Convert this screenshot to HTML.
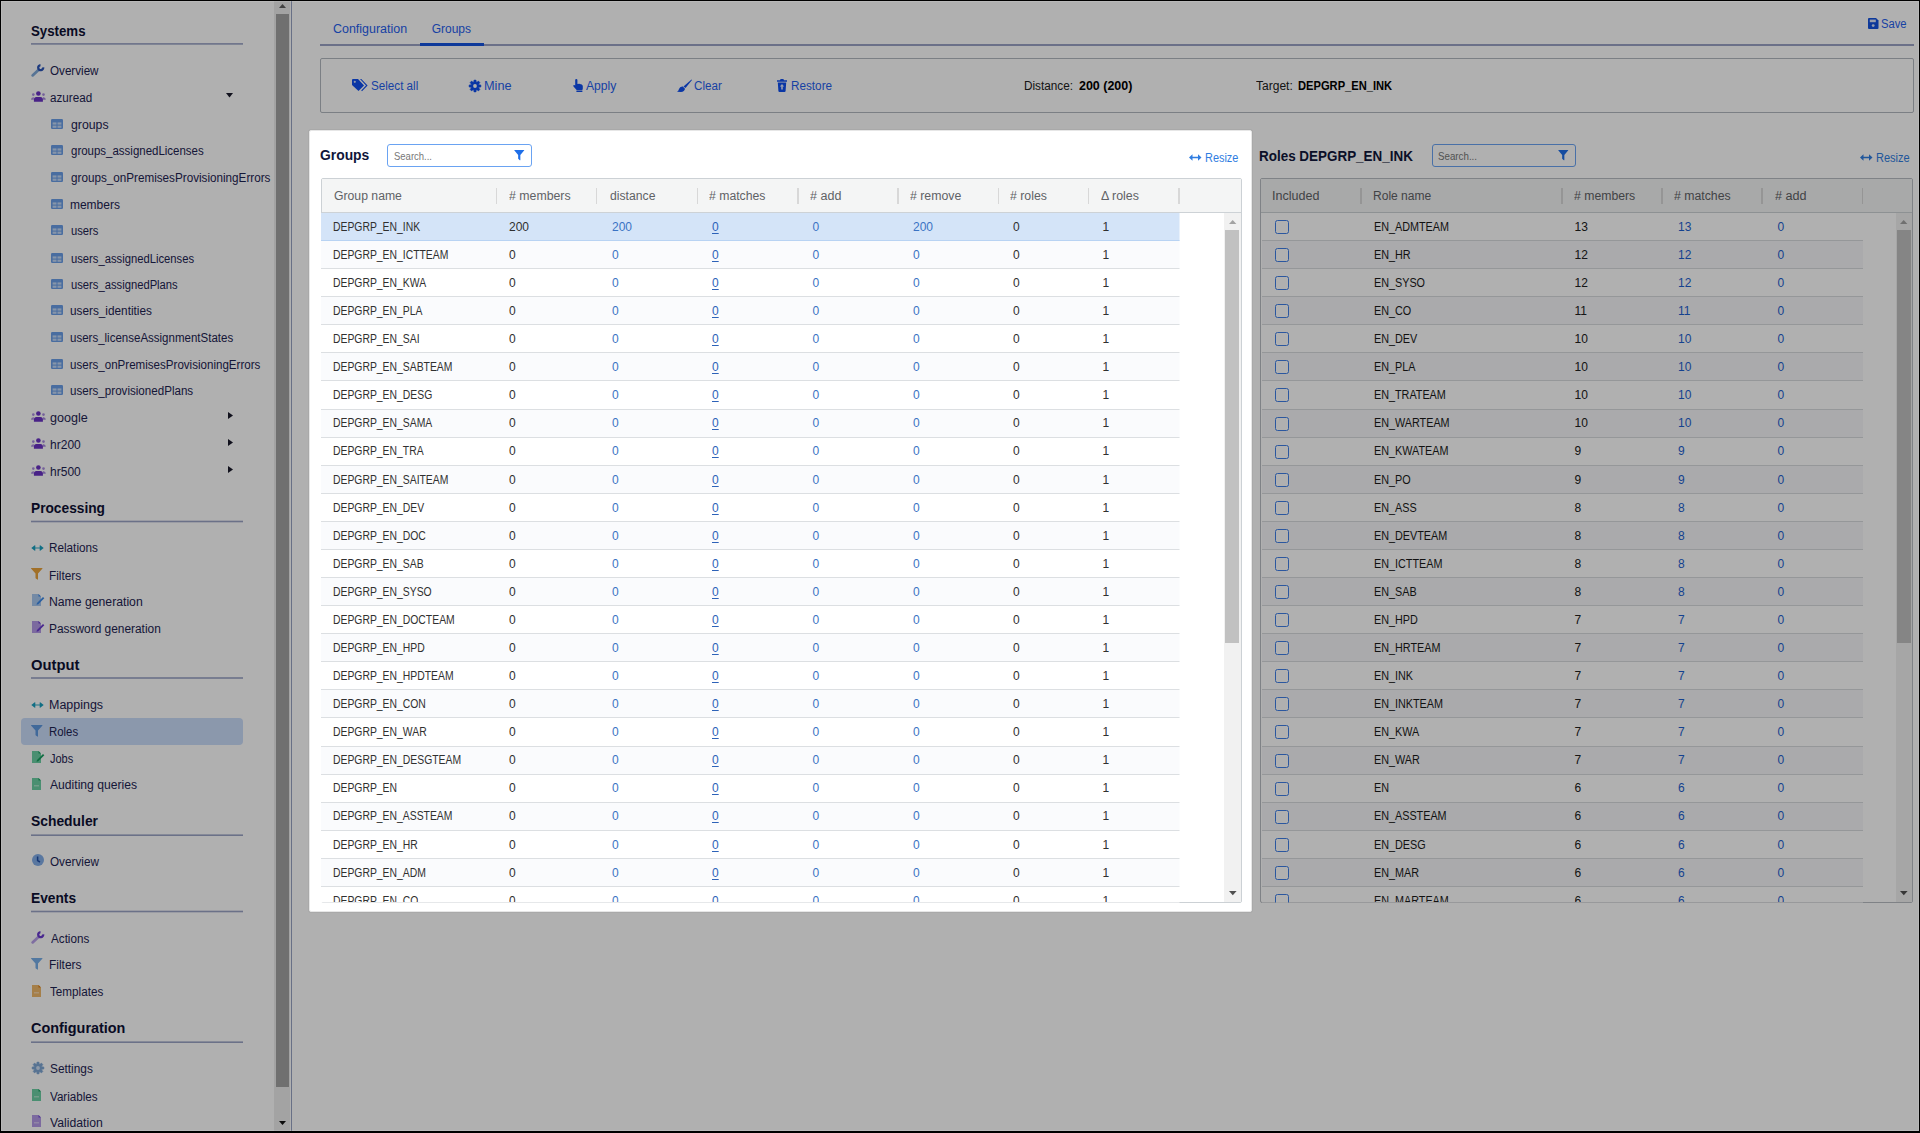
<!DOCTYPE html>
<html><head><meta charset="utf-8"><title>Groups</title><style>
*{margin:0;padding:0;box-sizing:border-box}
html,body{width:1920px;height:1133px;overflow:hidden;background:#fff;font-family:'Liberation Sans',sans-serif}
.t{position:absolute;white-space:nowrap;transform-origin:0 0}
.b{position:absolute}
.ic{position:absolute;overflow:visible}
#ov{position:absolute;left:0;top:0;width:1920px;height:1133px;background:rgba(0,0,0,0.31)}
</style></head>
<body>
<div id="app">
<span class=t style="left:30.85px;top:20.00px;font-size:15px;line-height:21px;font-weight:700;color:#0e1034;transform:scaleX(0.8837);">Systems</span>
<svg class=ic style='left:31px;top:42px' width='212' height='5'><rect x='0' y='1.10' width='212' height='1.6' fill='#9ba4c6'/></svg>
<span class=t style="left:50.10px;top:61.50px;font-size:12px;line-height:17px;font-weight:400;color:#1d2352;transform:scaleX(0.9705);margin-top:1px;">Overview</span>
<svg class=ic style="left:31px;top:64px" width="13" height="13" viewBox="0 0 13 13"><path d='M1.6 11.4 L7.4 5.9' stroke='#7ea9d8' stroke-width='2.7' stroke-linecap='round'/><path d='M12.19 3.38 A2.5 2.5 0 1 1 9.48 1.11' stroke='#2a55b8' stroke-width='2.3' fill='none' stroke-linecap='butt'/></svg>
<span class=t style="left:50.10px;top:88.50px;font-size:12px;line-height:17px;font-weight:400;color:#1d2352;transform:scaleX(0.9721);margin-top:1px;">azuread</span>
<svg class=ic style="left:31px;top:91px" width="15" height="11" viewBox="0 0 15 11"><circle cx='7.4' cy='2.5' r='2.3' fill='#6a32c4'/><path d='M2.9 10.8 V8.6 Q2.9 6.1 5.4 6.1 H9.4 Q11.9 6.1 11.9 8.6 V10.8Z' fill='#6a32c4'/><circle cx='2.3' cy='3.6' r='1.3' fill='#a98be0'/><circle cx='12.5' cy='3.6' r='1.3' fill='#a98be0'/><path d='M0 8.8 Q0 6.2 2.2 6.2 H2.8 V8.8Z' fill='#a98be0'/><path d='M14.8 8.8 Q14.8 6.2 12.6 6.2 H12 V8.8Z' fill='#a98be0'/></svg>
<svg class=ic style="left:225.5px;top:92.5px" width="7" height="4.5" viewBox="0 0 7 4.5"><path d='M0 0 H7 L3.5 4.5Z' fill='#1a1a2a'/></svg>
<span class=t style="left:70.72px;top:115.50px;font-size:12px;line-height:17px;font-weight:400;color:#1d2352;transform:scaleX(1.0249);margin-top:1px;">groups</span>
<svg class=ic style="left:51px;top:119px" width="12" height="10" viewBox="0 0 12 10"><rect x='0' y='0' width='12' height='10' rx='1.3' fill='#6a9ee8'/><rect x='1.6' y='3.4' width='3.9' height='2.2' fill='#fff' opacity='.6'/><rect x='6.5' y='3.4' width='3.9' height='2.2' fill='#fff' opacity='.6'/><rect x='1.6' y='6.6' width='3.9' height='2.2' fill='#fff' opacity='.6'/><rect x='6.5' y='6.6' width='3.9' height='2.2' fill='#fff' opacity='.6'/></svg>
<span class=t style="left:70.72px;top:141.50px;font-size:12px;line-height:17px;font-weight:400;color:#1d2352;transform:scaleX(0.9564);margin-top:1px;">groups_assignedLicenses</span>
<svg class=ic style="left:51px;top:145px" width="12" height="10" viewBox="0 0 12 10"><rect x='0' y='0' width='12' height='10' rx='1.3' fill='#6a9ee8'/><rect x='1.6' y='3.4' width='3.9' height='2.2' fill='#fff' opacity='.6'/><rect x='6.5' y='3.4' width='3.9' height='2.2' fill='#fff' opacity='.6'/><rect x='1.6' y='6.6' width='3.9' height='2.2' fill='#fff' opacity='.6'/><rect x='6.5' y='6.6' width='3.9' height='2.2' fill='#fff' opacity='.6'/></svg>
<span class=t style="left:70.72px;top:168.50px;font-size:12px;line-height:17px;font-weight:400;color:#1d2352;transform:scaleX(0.9740);margin-top:1px;">groups_onPremisesProvisioningErrors</span>
<svg class=ic style="left:51px;top:172px" width="12" height="10" viewBox="0 0 12 10"><rect x='0' y='0' width='12' height='10' rx='1.3' fill='#6a9ee8'/><rect x='1.6' y='3.4' width='3.9' height='2.2' fill='#fff' opacity='.6'/><rect x='6.5' y='3.4' width='3.9' height='2.2' fill='#fff' opacity='.6'/><rect x='1.6' y='6.6' width='3.9' height='2.2' fill='#fff' opacity='.6'/><rect x='6.5' y='6.6' width='3.9' height='2.2' fill='#fff' opacity='.6'/></svg>
<span class=t style="left:69.92px;top:195.50px;font-size:12px;line-height:17px;font-weight:400;color:#1d2352;margin-top:1px;">members</span>
<svg class=ic style="left:51px;top:199px" width="12" height="10" viewBox="0 0 12 10"><rect x='0' y='0' width='12' height='10' rx='1.3' fill='#6a9ee8'/><rect x='1.6' y='3.4' width='3.9' height='2.2' fill='#fff' opacity='.6'/><rect x='6.5' y='3.4' width='3.9' height='2.2' fill='#fff' opacity='.6'/><rect x='1.6' y='6.6' width='3.9' height='2.2' fill='#fff' opacity='.6'/><rect x='6.5' y='6.6' width='3.9' height='2.2' fill='#fff' opacity='.6'/></svg>
<span class=t style="left:70.72px;top:221.50px;font-size:12px;line-height:17px;font-weight:400;color:#1d2352;transform:scaleX(0.9350);margin-top:1px;">users</span>
<svg class=ic style="left:51px;top:225px" width="12" height="10" viewBox="0 0 12 10"><rect x='0' y='0' width='12' height='10' rx='1.3' fill='#6a9ee8'/><rect x='1.6' y='3.4' width='3.9' height='2.2' fill='#fff' opacity='.6'/><rect x='6.5' y='3.4' width='3.9' height='2.2' fill='#fff' opacity='.6'/><rect x='1.6' y='6.6' width='3.9' height='2.2' fill='#fff' opacity='.6'/><rect x='6.5' y='6.6' width='3.9' height='2.2' fill='#fff' opacity='.6'/></svg>
<span class=t style="left:70.72px;top:249.50px;font-size:12px;line-height:17px;font-weight:400;color:#1d2352;transform:scaleX(0.9365);margin-top:1px;">users_assignedLicenses</span>
<svg class=ic style="left:51px;top:253px" width="12" height="10" viewBox="0 0 12 10"><rect x='0' y='0' width='12' height='10' rx='1.3' fill='#6a9ee8'/><rect x='1.6' y='3.4' width='3.9' height='2.2' fill='#fff' opacity='.6'/><rect x='6.5' y='3.4' width='3.9' height='2.2' fill='#fff' opacity='.6'/><rect x='1.6' y='6.6' width='3.9' height='2.2' fill='#fff' opacity='.6'/><rect x='6.5' y='6.6' width='3.9' height='2.2' fill='#fff' opacity='.6'/></svg>
<span class=t style="left:70.72px;top:275.50px;font-size:12px;line-height:17px;font-weight:400;color:#1d2352;transform:scaleX(0.9355);margin-top:1px;">users_assignedPlans</span>
<svg class=ic style="left:51px;top:279px" width="12" height="10" viewBox="0 0 12 10"><rect x='0' y='0' width='12' height='10' rx='1.3' fill='#6a9ee8'/><rect x='1.6' y='3.4' width='3.9' height='2.2' fill='#fff' opacity='.6'/><rect x='6.5' y='3.4' width='3.9' height='2.2' fill='#fff' opacity='.6'/><rect x='1.6' y='6.6' width='3.9' height='2.2' fill='#fff' opacity='.6'/><rect x='6.5' y='6.6' width='3.9' height='2.2' fill='#fff' opacity='.6'/></svg>
<span class=t style="left:69.92px;top:301.50px;font-size:12px;line-height:17px;font-weight:400;color:#1d2352;transform:scaleX(0.9820);margin-top:1px;">users_identities</span>
<svg class=ic style="left:51px;top:305px" width="12" height="10" viewBox="0 0 12 10"><rect x='0' y='0' width='12' height='10' rx='1.3' fill='#6a9ee8'/><rect x='1.6' y='3.4' width='3.9' height='2.2' fill='#fff' opacity='.6'/><rect x='6.5' y='3.4' width='3.9' height='2.2' fill='#fff' opacity='.6'/><rect x='1.6' y='6.6' width='3.9' height='2.2' fill='#fff' opacity='.6'/><rect x='6.5' y='6.6' width='3.9' height='2.2' fill='#fff' opacity='.6'/></svg>
<span class=t style="left:69.92px;top:328.50px;font-size:12px;line-height:17px;font-weight:400;color:#1d2352;transform:scaleX(0.9592);margin-top:1px;">users_licenseAssignmentStates</span>
<svg class=ic style="left:51px;top:332px" width="12" height="10" viewBox="0 0 12 10"><rect x='0' y='0' width='12' height='10' rx='1.3' fill='#6a9ee8'/><rect x='1.6' y='3.4' width='3.9' height='2.2' fill='#fff' opacity='.6'/><rect x='6.5' y='3.4' width='3.9' height='2.2' fill='#fff' opacity='.6'/><rect x='1.6' y='6.6' width='3.9' height='2.2' fill='#fff' opacity='.6'/><rect x='6.5' y='6.6' width='3.9' height='2.2' fill='#fff' opacity='.6'/></svg>
<span class=t style="left:69.92px;top:355.50px;font-size:12px;line-height:17px;font-weight:400;color:#1d2352;transform:scaleX(0.9641);margin-top:1px;">users_onPremisesProvisioningErrors</span>
<svg class=ic style="left:51px;top:359px" width="12" height="10" viewBox="0 0 12 10"><rect x='0' y='0' width='12' height='10' rx='1.3' fill='#6a9ee8'/><rect x='1.6' y='3.4' width='3.9' height='2.2' fill='#fff' opacity='.6'/><rect x='6.5' y='3.4' width='3.9' height='2.2' fill='#fff' opacity='.6'/><rect x='1.6' y='6.6' width='3.9' height='2.2' fill='#fff' opacity='.6'/><rect x='6.5' y='6.6' width='3.9' height='2.2' fill='#fff' opacity='.6'/></svg>
<span class=t style="left:69.92px;top:381.50px;font-size:12px;line-height:17px;font-weight:400;color:#1d2352;transform:scaleX(0.9667);margin-top:1px;">users_provisionedPlans</span>
<svg class=ic style="left:51px;top:385px" width="12" height="10" viewBox="0 0 12 10"><rect x='0' y='0' width='12' height='10' rx='1.3' fill='#6a9ee8'/><rect x='1.6' y='3.4' width='3.9' height='2.2' fill='#fff' opacity='.6'/><rect x='6.5' y='3.4' width='3.9' height='2.2' fill='#fff' opacity='.6'/><rect x='1.6' y='6.6' width='3.9' height='2.2' fill='#fff' opacity='.6'/><rect x='6.5' y='6.6' width='3.9' height='2.2' fill='#fff' opacity='.6'/></svg>
<span class=t style="left:50.10px;top:408.50px;font-size:12px;line-height:17px;font-weight:400;color:#1d2352;transform:scaleX(1.0486);margin-top:1px;">google</span>
<svg class=ic style="left:31px;top:411px" width="15" height="11" viewBox="0 0 15 11"><circle cx='7.4' cy='2.5' r='2.3' fill='#6a32c4'/><path d='M2.9 10.8 V8.6 Q2.9 6.1 5.4 6.1 H9.4 Q11.9 6.1 11.9 8.6 V10.8Z' fill='#6a32c4'/><circle cx='2.3' cy='3.6' r='1.3' fill='#a98be0'/><circle cx='12.5' cy='3.6' r='1.3' fill='#a98be0'/><path d='M0 8.8 Q0 6.2 2.2 6.2 H2.8 V8.8Z' fill='#a98be0'/><path d='M14.8 8.8 Q14.8 6.2 12.6 6.2 H12 V8.8Z' fill='#a98be0'/></svg>
<svg class=ic style="left:228px;top:411.5px" width="5" height="7" viewBox="0 0 5 7"><path d='M0 0 L5 3.5 L0 7Z' fill='#1a1a2a'/></svg>
<span class=t style="left:50.10px;top:435.50px;font-size:12px;line-height:17px;font-weight:400;color:#1d2352;margin-top:1px;">hr200</span>
<svg class=ic style="left:31px;top:438px" width="15" height="11" viewBox="0 0 15 11"><circle cx='7.4' cy='2.5' r='2.3' fill='#6a32c4'/><path d='M2.9 10.8 V8.6 Q2.9 6.1 5.4 6.1 H9.4 Q11.9 6.1 11.9 8.6 V10.8Z' fill='#6a32c4'/><circle cx='2.3' cy='3.6' r='1.3' fill='#a98be0'/><circle cx='12.5' cy='3.6' r='1.3' fill='#a98be0'/><path d='M0 8.8 Q0 6.2 2.2 6.2 H2.8 V8.8Z' fill='#a98be0'/><path d='M14.8 8.8 Q14.8 6.2 12.6 6.2 H12 V8.8Z' fill='#a98be0'/></svg>
<svg class=ic style="left:228px;top:438.5px" width="5" height="7" viewBox="0 0 5 7"><path d='M0 0 L5 3.5 L0 7Z' fill='#1a1a2a'/></svg>
<span class=t style="left:50.10px;top:462.50px;font-size:12px;line-height:17px;font-weight:400;color:#1d2352;margin-top:1px;">hr500</span>
<svg class=ic style="left:31px;top:465px" width="15" height="11" viewBox="0 0 15 11"><circle cx='7.4' cy='2.5' r='2.3' fill='#6a32c4'/><path d='M2.9 10.8 V8.6 Q2.9 6.1 5.4 6.1 H9.4 Q11.9 6.1 11.9 8.6 V10.8Z' fill='#6a32c4'/><circle cx='2.3' cy='3.6' r='1.3' fill='#a98be0'/><circle cx='12.5' cy='3.6' r='1.3' fill='#a98be0'/><path d='M0 8.8 Q0 6.2 2.2 6.2 H2.8 V8.8Z' fill='#a98be0'/><path d='M14.8 8.8 Q14.8 6.2 12.6 6.2 H12 V8.8Z' fill='#a98be0'/></svg>
<svg class=ic style="left:228px;top:465.5px" width="5" height="7" viewBox="0 0 5 7"><path d='M0 0 L5 3.5 L0 7Z' fill='#1a1a2a'/></svg>
<span class=t style="left:30.85px;top:497.00px;font-size:15px;line-height:21px;font-weight:700;color:#0e1034;transform:scaleX(0.9148);">Processing</span>
<svg class=ic style='left:31px;top:519px' width='212' height='5'><rect x='0' y='1.70' width='212' height='1.6' fill='#9ba4c6'/></svg>
<span class=t style="left:49.30px;top:538.50px;font-size:12px;line-height:17px;font-weight:400;color:#1d2352;transform:scaleX(0.9773);margin-top:1px;">Relations</span>
<svg class=ic style="left:31.2px;top:545px" width="13" height="6" viewBox="0 0 13 6"><path d='M0.3 3 L3.8 0.2 Q4.3 0 4.3 0.6 V5.4 Q4.3 6 3.8 5.8Z M12.7 3 L9.2 0.2 Q8.7 0 8.7 0.6 V5.4 Q8.7 6 9.2 5.8Z' fill='#1aa0c0'/><rect x='4' y='2.2' width='5' height='1.6' fill='#1aa0c0' opacity='.55'/></svg>
<span class=t style="left:49.30px;top:566.50px;font-size:12px;line-height:17px;font-weight:400;color:#1d2352;transform:scaleX(0.9850);margin-top:1px;">Filters</span>
<svg class=ic style="left:31.2px;top:567.5px" width="11.5" height="12" viewBox="0 0 11.5 12"><path d='M0.2 0 H11.3 Q11.7 0 11.5 0.4 L7 5.6 V11.3 Q7 12 6.4 11.6 L4.8 10.4 Q4.5 10.2 4.5 9.8 V5.6 L0 0.4 Q-0.2 0 0.2 0Z' fill='#e9a23b'/></svg>
<span class=t style="left:49.30px;top:592.50px;font-size:12px;line-height:17px;font-weight:400;color:#1d2352;transform:scaleX(1.0178);margin-top:1px;">Name generation</span>
<svg class=ic style="left:31.5px;top:594px" width="13" height="12" viewBox="0 0 13 12"><path d='M0 0 H6.5 L9 2.5 V12 H0Z' fill='#a9c8f0'/><path d='M5 9 L11 3 L12.3 4.3 L6.3 10.3 L4.5 10.8Z' fill='#3d8ae8'/><path d='M6.5 0 V2.5 H9Z' fill='#3d8ae8'/></svg>
<span class=t style="left:49.30px;top:619.50px;font-size:12px;line-height:17px;font-weight:400;color:#1d2352;transform:scaleX(0.9917);margin-top:1px;">Password generation</span>
<svg class=ic style="left:31.5px;top:621px" width="13" height="12" viewBox="0 0 13 12"><path d='M0 0 H6.5 L9 2.5 V12 H0Z' fill='#b49ae6'/><path d='M5 9 L11 3 L12.3 4.3 L6.3 10.3 L4.5 10.8Z' fill='#6a3ad0'/><path d='M6.5 0 V2.5 H9Z' fill='#6a3ad0'/></svg>
<span class=t style="left:30.85px;top:654.00px;font-size:15px;line-height:21px;font-weight:700;color:#0e1034;transform:scaleX(0.9860);">Output</span>
<svg class=ic style='left:31px;top:676px' width='212' height='5'><rect x='0' y='1.20' width='212' height='1.6' fill='#9ba4c6'/></svg>
<span class=t style="left:49.30px;top:695.50px;font-size:12px;line-height:17px;font-weight:400;color:#1d2352;transform:scaleX(1.0393);margin-top:1px;">Mappings</span>
<svg class=ic style="left:31.2px;top:702px" width="13" height="6" viewBox="0 0 13 6"><path d='M0.3 3 L3.8 0.2 Q4.3 0 4.3 0.6 V5.4 Q4.3 6 3.8 5.8Z M12.7 3 L9.2 0.2 Q8.7 0 8.7 0.6 V5.4 Q8.7 6 9.2 5.8Z' fill='#1aa0c0'/><rect x='4' y='2.2' width='5' height='1.6' fill='#1aa0c0' opacity='.55'/></svg>
<div class=b style='left:21px;top:717.5px;width:222px;height:27px;border-radius:4px;background:#cadcfa'></div>
<span class=t style="left:49.30px;top:722.50px;font-size:12px;line-height:17px;font-weight:400;color:#1d2352;transform:scaleX(0.9480);margin-top:1px;">Roles</span>
<svg class=ic style="left:31.2px;top:724.5px" width="11.5" height="12" viewBox="0 0 11.5 12"><path d='M0.2 0 H11.3 Q11.7 0 11.5 0.4 L7 5.6 V11.3 Q7 12 6.4 11.6 L4.8 10.4 Q4.5 10.2 4.5 9.8 V5.6 L0 0.4 Q-0.2 0 0.2 0Z' fill='#5e98e0'/></svg>
<span class=t style="left:50.10px;top:749.50px;font-size:12px;line-height:17px;font-weight:400;color:#1d2352;transform:scaleX(0.9170);margin-top:1px;">Jobs</span>
<svg class=ic style="left:31.5px;top:751px" width="13" height="12" viewBox="0 0 13 12"><path d='M0 0 H6.5 L9 2.5 V12 H0Z' fill='#6cd0a4'/><path d='M5 9 L11 3 L12.3 4.3 L6.3 10.3 L4.5 10.8Z' fill='#18a060'/><path d='M6.5 0 V2.5 H9Z' fill='#18a060'/></svg>
<span class=t style="left:50.10px;top:775.50px;font-size:12px;line-height:17px;font-weight:400;color:#1d2352;transform:scaleX(1.0109);margin-top:1px;">Auditing queries</span>
<svg class=ic style="left:31.5px;top:778px" width="9" height="12" viewBox="0 0 9 12"><path d='M0 0 H6.5 L9 2.5 V12 H0Z' fill='#6cd0a4'/><path d='M6.5 0 V2.5 H9Z' fill='#18a060'/><rect x='2' y='7.2' width='5' height='1.2' fill='#fff' opacity='.5'/></svg>
<span class=t style="left:30.85px;top:810.00px;font-size:15px;line-height:21px;font-weight:700;color:#0e1034;transform:scaleX(0.9238);">Scheduler</span>
<svg class=ic style='left:31px;top:833px' width='212' height='5'><rect x='0' y='1.40' width='212' height='1.6' fill='#9ba4c6'/></svg>
<span class=t style="left:50.10px;top:852.50px;font-size:12px;line-height:17px;font-weight:400;color:#1d2352;transform:scaleX(0.9776);margin-top:1px;">Overview</span>
<svg class=ic style="left:31.5px;top:854px" width="12" height="12" viewBox="0 0 12 12"><circle cx='6' cy='6' r='6' fill='#82ade8'/><path d='M5.6 2.5 V6.6 L8 8' stroke='#1f4fa8' stroke-width='1.5' fill='none'/></svg>
<span class=t style="left:30.85px;top:887.00px;font-size:15px;line-height:21px;font-weight:700;color:#0e1034;transform:scaleX(0.9162);">Events</span>
<svg class=ic style='left:31px;top:909px' width='212' height='5'><rect x='0' y='1.70' width='212' height='1.6' fill='#9ba4c6'/></svg>
<span class=t style="left:50.90px;top:929.50px;font-size:12px;line-height:17px;font-weight:400;color:#1d2352;transform:scaleX(0.9730);margin-top:1px;">Actions</span>
<svg class=ic style="left:31px;top:931px" width="13" height="13" viewBox="0 0 13 13"><path d='M1.6 11.4 L7.4 5.9' stroke='#b9a0ea' stroke-width='2.7' stroke-linecap='round'/><path d='M12.19 3.38 A2.5 2.5 0 1 1 9.48 1.11' stroke='#6a3ad0' stroke-width='2.3' fill='none' stroke-linecap='butt'/></svg>
<span class=t style="left:49.30px;top:955.50px;font-size:12px;line-height:17px;font-weight:400;color:#1d2352;transform:scaleX(0.9935);margin-top:1px;">Filters</span>
<svg class=ic style="left:31.2px;top:958px" width="11.5" height="12" viewBox="0 0 11.5 12"><path d='M0.2 0 H11.3 Q11.7 0 11.5 0.4 L7 5.6 V11.3 Q7 12 6.4 11.6 L4.8 10.4 Q4.5 10.2 4.5 9.8 V5.6 L0 0.4 Q-0.2 0 0.2 0Z' fill='#78aee8'/></svg>
<span class=t style="left:50.10px;top:982.50px;font-size:12px;line-height:17px;font-weight:400;color:#1d2352;transform:scaleX(0.9736);margin-top:1px;">Templates</span>
<svg class=ic style="left:31.5px;top:985px" width="9" height="12" viewBox="0 0 9 12"><path d='M0 0 H6.5 L9 2.5 V12 H0Z' fill='#f0b86a'/><path d='M6.5 0 V2.5 H9Z' fill='#d97a10'/><rect x='2' y='7.2' width='5' height='1.2' fill='#fff' opacity='.5'/></svg>
<span class=t style="left:30.85px;top:1017.00px;font-size:15px;line-height:21px;font-weight:700;color:#0e1034;transform:scaleX(0.9604);">Configuration</span>
<svg class=ic style='left:31px;top:1040px' width='212' height='5'><rect x='0' y='1.40' width='212' height='1.6' fill='#9ba4c6'/></svg>
<span class=t style="left:50.10px;top:1059.50px;font-size:12px;line-height:17px;font-weight:400;color:#1d2352;transform:scaleX(0.9893);margin-top:1px;">Settings</span>
<svg class=ic style="left:31.5px;top:1062px" width="12" height="12" viewBox="0 0 12 12"><polygon points='9.88,4.67 11.91,4.98 11.91,7.02 9.88,7.33 9.68,7.80 10.90,9.46 9.46,10.90 7.80,9.68 7.33,9.88 7.02,11.91 4.98,11.91 4.67,9.88 4.20,9.68 2.54,10.90 1.10,9.46 2.32,7.80 2.12,7.33 0.09,7.02 0.09,4.98 2.12,4.67 2.32,4.20 1.10,2.54 2.54,1.10 4.20,2.32 4.67,2.12 4.98,0.09 7.02,0.09 7.33,2.12 7.80,2.32 9.46,1.10 10.90,2.54 9.68,4.20' fill='#7fa7d4' stroke='#7fa7d4' stroke-width='0.5' stroke-linejoin='round'/><circle cx='6' cy='6' r='1.9' fill='#cfe0f4'/></svg>
<span class=t style="left:50.10px;top:1087.50px;font-size:12px;line-height:17px;font-weight:400;color:#1d2352;transform:scaleX(0.9690);margin-top:1px;">Variables</span>
<svg class=ic style="left:31.5px;top:1089px" width="9" height="12" viewBox="0 0 9 12"><path d='M0 0 H6.5 L9 2.5 V12 H0Z' fill='#6cd0a4'/><path d='M6.5 0 V2.5 H9Z' fill='#18a060'/><rect x='2' y='7.2' width='5' height='1.2' fill='#fff' opacity='.5'/></svg>
<span class=t style="left:50.10px;top:1113.50px;font-size:12px;line-height:17px;font-weight:400;color:#1d2352;transform:scaleX(1.0188);margin-top:1px;">Validation</span>
<svg class=ic style="left:31.5px;top:1115px" width="9" height="12" viewBox="0 0 9 12"><path d='M0 0 H6.5 L9 2.5 V12 H0Z' fill='#b49ae6'/><path d='M6.5 0 V2.5 H9Z' fill='#7048d8'/><rect x='2' y='7.2' width='5' height='1.2' fill='#fff' opacity='.5'/></svg>
<div class=b style='left:274px;top:1px;width:16px;height:1131px;background:#ececec'></div>
<div class=b style='left:275.5px;top:14px;width:13.5px;height:1073px;background:#a3a3a3'></div>
<svg class=ic style="left:278.7px;top:4px" width="7" height="4" viewBox="0 0 7 4"><path d='M0 4 H7 L3.5 0Z' fill='#606060'/></svg>
<svg class=ic style="left:278.7px;top:1120.5px" width="7" height="4" viewBox="0 0 7 4"><path d='M0 0 H7 L3.5 4Z' fill='#101010'/></svg>
<div class=b style='left:291px;top:0;width:1px;height:1133px;background:#97a2c2'></div>
<span class=t style="left:332.74px;top:19.50px;font-size:12px;line-height:17px;font-weight:400;color:#1f60ee;transform:scaleX(1.0376);margin-top:1px;">Configuration</span>
<span class=t style="left:431.66px;top:19.50px;font-size:12px;line-height:17px;font-weight:400;color:#1f60ee;margin-top:1px;">Groups</span>
<div class=b style='left:320px;top:44px;width:1594px;height:2px;background:#9ba3c6'></div>
<div class=b style='left:419.5px;top:42.5px;width:64px;height:3px;background:#1553e0'></div>
<svg class=ic style="left:1868px;top:18px" width="10.5" height="11" viewBox="0 0 10.5 11"><path d='M0 1 Q0 0 1 0 H8 L10.5 2.5 V10 Q10.5 11 9.5 11 H1 Q0 11 0 10Z' fill='#1553e0'/><rect x='1.8' y='1.6' width='6' height='2.6' fill='#fff' opacity='.85'/><circle cx='5.2' cy='7.6' r='1.4' fill='#fff' opacity='.85'/></svg>
<span class=t style="left:1880.84px;top:15.50px;font-size:12px;line-height:17px;font-weight:400;color:#1f60ee;transform:scaleX(0.9334);">Save</span>
<div class=b style='left:320px;top:58px;width:1594px;height:55px;border:1px solid #b3b8c0;border-radius:2px'></div>
<svg class=ic style="left:352px;top:79px" width="16" height="13" viewBox="0 0 16 13"><path d='M0 1 Q0 0 1 0 H6 L12 6.5 L6.5 12 L0 6Z' fill='#0f4ff0'/><circle cx='2.8' cy='2.8' r='1.1' fill='#fff' opacity='.8'/><path d='M8 0 H9.3 L15.6 6.5 L10 12.3 L9.2 11.5 L14 6.5Z' fill='#0f4ff0'/></svg>
<span class=t style="left:371.20px;top:77.50px;font-size:12px;line-height:17px;font-weight:400;color:#1f60ee;transform:scaleX(0.9704);">Select all</span>
<svg class=ic style="left:469px;top:79.5px" width="12" height="12" viewBox="0 0 12 12"><polygon points='9.88,4.67 11.91,4.98 11.91,7.02 9.88,7.33 9.68,7.80 10.90,9.46 9.46,10.90 7.80,9.68 7.33,9.88 7.02,11.91 4.98,11.91 4.67,9.88 4.20,9.68 2.54,10.90 1.10,9.46 2.32,7.80 2.12,7.33 0.09,7.02 0.09,4.98 2.12,4.67 2.32,4.20 1.10,2.54 2.54,1.10 4.20,2.32 4.67,2.12 4.98,0.09 7.02,0.09 7.33,2.12 7.80,2.32 9.46,1.10 10.90,2.54 9.68,4.20' fill='#0f4ff0' stroke='#0f4ff0' stroke-width='0.5' stroke-linejoin='round'/><circle cx='6' cy='6' r='1.9' fill='#fff'/></svg>
<span class=t style="left:483.92px;top:77.50px;font-size:12px;line-height:17px;font-weight:400;color:#1f60ee;transform:scaleX(1.0584);">Mine</span>
<svg class=ic style="left:572.5px;top:78.5px" width="10" height="13" viewBox="0 0 10 13"><path d='M2.2 1.1 Q2.2 0 3.3 0 Q4.4 0 4.4 1.1 V5 Q5.2 4.4 6 5 Q6.9 4.5 7.6 5.3 Q8.6 5 9.2 5.9 Q9.8 6.3 9.8 7.2 V9.6 Q9.8 10.6 9.3 11 H3.6 L0.5 7.6 Q-0.2 6.6 0.8 6.1 Q1.5 5.8 2.2 6.5Z' fill='#0f4ff0'/><rect x='3.4' y='11.4' width='6' height='1.6' rx='0.3' fill='#0f4ff0'/></svg>
<span class=t style="left:586.00px;top:77.50px;font-size:12px;line-height:17px;font-weight:400;color:#1f60ee;transform:scaleX(1.0109);">Apply</span>
<svg class=ic style="left:676.6px;top:79px" width="15" height="13" viewBox="0 0 15 13"><path d='M6.5 7.5 L14.5 0.5 L15 1 L8.5 9Z' fill='#0f4ff0'/><path d='M0 12.8 Q1.5 12 2 10 Q2.8 7.2 5.8 7.5 L8 9.7 Q7.5 12.8 4 13Z' fill='#0f4ff0'/></svg>
<span class=t style="left:694.20px;top:77.50px;font-size:12px;line-height:17px;font-weight:400;color:#1f60ee;transform:scaleX(0.9691);">Clear</span>
<svg class=ic style="left:777px;top:78.5px" width="10" height="13" viewBox="0 0 10 13"><path d='M0 1.2 H3 L3.6 0 H6.4 L7 1.2 H10 V2.8 H0Z M0.8 3.5 H9.2 L8.6 12 Q8.5 13 7.5 13 H2.5 Q1.5 13 1.4 12Z' fill='#0f4ff0'/><path d='M5 5 L7.2 7.6 H5.8 V10.5 H4.2 V7.6 H2.8Z' fill='#fff' opacity='.85'/></svg>
<span class=t style="left:790.74px;top:77.50px;font-size:12px;line-height:17px;font-weight:400;color:#1f60ee;transform:scaleX(0.9774);">Restore</span>
<span class=t style="left:1024.20px;top:77.50px;font-size:12px;line-height:17px;font-weight:400;color:#202020;transform:scaleX(0.9809);">Distance:</span>
<span class=t style="left:1079.00px;top:77.50px;font-size:12px;line-height:17px;font-weight:700;color:#000;transform:scaleX(1.0386);">200 (200)</span>
<span class=t style="left:1256.00px;top:77.50px;font-size:12px;line-height:17px;font-weight:400;color:#202020;transform:scaleX(1.0031);">Target:</span>
<span class=t style="left:1298.10px;top:77.50px;font-size:12px;line-height:17px;font-weight:700;color:#000;transform:scaleX(0.9290);">DEPGRP_EN_INK</span>
<span class=t style="left:1259.30px;top:146.00px;font-size:14px;line-height:20px;font-weight:700;color:#10163a;transform:scaleX(0.9601);">Roles DEPGRP_EN_INK</span>
<div class=b style='left:1432px;top:143.6px;width:143.5999999999999px;height:23.0px;border:1.5px solid #6aa3f2;border-radius:3px;background:#fff'></div>
<span class=t style="left:1438.20px;top:148.50px;font-size:11px;line-height:15px;font-weight:400;color:#777;transform:scaleX(0.8860);">Search...</span>
<svg class=ic style="left:1557.5px;top:150px" width="10.5" height="10.5" viewBox="0 0 11.5 12"><path d='M0.2 0 H11.3 Q11.7 0 11.5 0.4 L7 5.6 V11.3 Q7 12 6.4 11.6 L4.8 10.4 Q4.5 10.2 4.5 9.8 V5.6 L0 0.4 Q-0.2 0 0.2 0Z' fill='#1f6fe8'/></svg>
<svg class=ic style="left:1860px;top:153.5px" width="12.5" height="7" viewBox="0 0 12.5 7"><path d='M0 3.5 L3.5 0.3 V2.7 H9 V0.3 L12.5 3.5 L9 6.7 V4.3 H3.5 V6.7Z' fill='#2f7de1'/></svg>
<span class=t style="left:1875.74px;top:149.50px;font-size:12px;line-height:17px;font-weight:400;color:#2f7de1;transform:scaleX(0.9190);">Resize</span>
<div class=b style='left:1260px;top:178px;width:653px;height:725px;border:1px solid #b9bdc2;border-radius:2px;overflow:hidden'></div>
<div class=b style='left:1261px;top:179px;width:651px;height:34px;background:#f4f5f5;border-bottom:1px solid #cdd2d6'></div>
<div class=b style='left:1360.2px;top:188px;width:1.5px;height:15.5px;background:#d8d8d8'></div>
<div class=b style='left:1561.3px;top:188px;width:1.5px;height:15.5px;background:#d8d8d8'></div>
<div class=b style='left:1661.2px;top:188px;width:1.5px;height:15.5px;background:#d8d8d8'></div>
<div class=b style='left:1761.4px;top:188px;width:1.5px;height:15.5px;background:#d8d8d8'></div>
<div class=b style='left:1861.9px;top:188px;width:1.5px;height:15.5px;background:#d8d8d8'></div>
<span class=t style="left:1272.48px;top:187.50px;font-size:12px;line-height:17px;font-weight:400;color:#5f6266;transform:scaleX(1.0457);">Included</span>
<span class=t style="left:1373.02px;top:187.50px;font-size:12px;line-height:17px;font-weight:400;color:#5f6266;transform:scaleX(1.0039);">Role name</span>
<span class=t style="left:1574.10px;top:187.50px;font-size:12px;line-height:17px;font-weight:400;color:#5f6266;transform:scaleX(1.0192);"># members</span>
<span class=t style="left:1674.28px;top:187.50px;font-size:12px;line-height:17px;font-weight:400;color:#5f6266;transform:scaleX(1.0228);"># matches</span>
<span class=t style="left:1775.18px;top:187.50px;font-size:12px;line-height:17px;font-weight:400;color:#5f6266;transform:scaleX(1.0500);"># add</span>
<div class=b style='left:1896px;top:213px;width:16px;height:689px;background:#f1f1f1'></div>
<div class=b style='left:1897px;top:229.5px;width:14px;height:413.5px;background:#c1c1c1'></div>
<svg class=ic style="left:1899.8px;top:220px" width="7.4" height="4" viewBox="0 0 7.4 4"><path d='M0 4 H7.4 L3.7 0Z' fill='#a3a3a3'/></svg>
<svg class=ic style="left:1899.8px;top:890.5px" width="7.6" height="4.3" viewBox="0 0 7.6 4.3"><path d='M0 0 H7.6 L3.8 4.3Z' fill='#505050'/></svg>
<div class=b style='left:1261.5px;top:213.00px;width:601.5px;height:28px;background:#ffffff;border-bottom:1px solid #d8dbde;clip-path:inset(0 0 0.00px 0)'></div>
<div class=b style='left:1261.5px;top:241.00px;width:601.5px;height:28px;background:#f6f7f9;border-bottom:1px solid #d8dbde;clip-path:inset(0 0 0.00px 0)'></div>
<div class=b style='left:1261.5px;top:269.00px;width:601.5px;height:28px;background:#ffffff;border-bottom:1px solid #d8dbde;clip-path:inset(0 0 0.00px 0)'></div>
<div class=b style='left:1261.5px;top:297.00px;width:601.5px;height:28px;background:#f6f7f9;border-bottom:1px solid #d8dbde;clip-path:inset(0 0 0.00px 0)'></div>
<div class=b style='left:1261.5px;top:325.00px;width:601.5px;height:28px;background:#ffffff;border-bottom:1px solid #d8dbde;clip-path:inset(0 0 0.00px 0)'></div>
<div class=b style='left:1261.5px;top:353.00px;width:601.5px;height:28px;background:#f6f7f9;border-bottom:1px solid #d8dbde;clip-path:inset(0 0 0.00px 0)'></div>
<div class=b style='left:1261.5px;top:381.00px;width:601.5px;height:29px;background:#ffffff;border-bottom:1px solid #d8dbde;clip-path:inset(0 0 0.00px 0)'></div>
<div class=b style='left:1261.5px;top:410.00px;width:601.5px;height:28px;background:#f6f7f9;border-bottom:1px solid #d8dbde;clip-path:inset(0 0 0.00px 0)'></div>
<div class=b style='left:1261.5px;top:438.00px;width:601.5px;height:28px;background:#ffffff;border-bottom:1px solid #d8dbde;clip-path:inset(0 0 0.00px 0)'></div>
<div class=b style='left:1261.5px;top:466.00px;width:601.5px;height:28px;background:#f6f7f9;border-bottom:1px solid #d8dbde;clip-path:inset(0 0 0.00px 0)'></div>
<div class=b style='left:1261.5px;top:494.00px;width:601.5px;height:28px;background:#ffffff;border-bottom:1px solid #d8dbde;clip-path:inset(0 0 0.00px 0)'></div>
<div class=b style='left:1261.5px;top:522.00px;width:601.5px;height:28px;background:#f6f7f9;border-bottom:1px solid #d8dbde;clip-path:inset(0 0 0.00px 0)'></div>
<div class=b style='left:1261.5px;top:550.00px;width:601.5px;height:28px;background:#ffffff;border-bottom:1px solid #d8dbde;clip-path:inset(0 0 0.00px 0)'></div>
<div class=b style='left:1261.5px;top:578.00px;width:601.5px;height:28px;background:#f6f7f9;border-bottom:1px solid #d8dbde;clip-path:inset(0 0 0.00px 0)'></div>
<div class=b style='left:1261.5px;top:606.00px;width:601.5px;height:28px;background:#ffffff;border-bottom:1px solid #d8dbde;clip-path:inset(0 0 0.00px 0)'></div>
<div class=b style='left:1261.5px;top:634.00px;width:601.5px;height:28px;background:#f6f7f9;border-bottom:1px solid #d8dbde;clip-path:inset(0 0 0.00px 0)'></div>
<div class=b style='left:1261.5px;top:662.00px;width:601.5px;height:28px;background:#ffffff;border-bottom:1px solid #d8dbde;clip-path:inset(0 0 0.00px 0)'></div>
<div class=b style='left:1261.5px;top:690.00px;width:601.5px;height:28px;background:#f6f7f9;border-bottom:1px solid #d8dbde;clip-path:inset(0 0 0.00px 0)'></div>
<div class=b style='left:1261.5px;top:718.00px;width:601.5px;height:29px;background:#ffffff;border-bottom:1px solid #d8dbde;clip-path:inset(0 0 0.00px 0)'></div>
<div class=b style='left:1261.5px;top:747.00px;width:601.5px;height:28px;background:#f6f7f9;border-bottom:1px solid #d8dbde;clip-path:inset(0 0 0.00px 0)'></div>
<div class=b style='left:1261.5px;top:775.00px;width:601.5px;height:28px;background:#ffffff;border-bottom:1px solid #d8dbde;clip-path:inset(0 0 0.00px 0)'></div>
<div class=b style='left:1261.5px;top:803.00px;width:601.5px;height:28px;background:#f6f7f9;border-bottom:1px solid #d8dbde;clip-path:inset(0 0 0.00px 0)'></div>
<div class=b style='left:1261.5px;top:831.00px;width:601.5px;height:28px;background:#ffffff;border-bottom:1px solid #d8dbde;clip-path:inset(0 0 0.00px 0)'></div>
<div class=b style='left:1261.5px;top:859.00px;width:601.5px;height:28px;background:#f6f7f9;border-bottom:1px solid #d8dbde;clip-path:inset(0 0 0.00px 0)'></div>
<div class=b style='left:1261.5px;top:887.00px;width:601.5px;height:28px;background:#ffffff;border-bottom:1px solid #d8dbde;clip-path:inset(0 0 12.50px 0)'></div>
<div class=b style='left:1275px;top:219.70px;width:14px;height:14px;border:1.6px solid #3f7fe6;border-radius:2.5px;background:#fff;'></div>
<span class=t style="left:1374.00px;top:218.50px;font-size:12px;line-height:17px;font-weight:400;color:#1a1a1a;transform:scaleX(0.9000);">EN_ADMTEAM</span>
<span class=t style="left:1574.50px;top:218.50px;font-size:12px;line-height:17px;font-weight:400;color:#202020;">13</span>
<span class=t style="left:1678.00px;top:218.50px;font-size:12px;line-height:17px;font-weight:400;color:#1d5fd0;">13</span>
<span class=t style="left:1777.60px;top:218.50px;font-size:12px;line-height:17px;font-weight:400;color:#1d5fd0;">0</span>
<div class=b style='left:1275px;top:247.70px;width:14px;height:14px;border:1.6px solid #3f7fe6;border-radius:2.5px;background:#fff;'></div>
<span class=t style="left:1374.00px;top:246.50px;font-size:12px;line-height:17px;font-weight:400;color:#1a1a1a;transform:scaleX(0.9000);">EN_HR</span>
<span class=t style="left:1574.50px;top:246.50px;font-size:12px;line-height:17px;font-weight:400;color:#202020;">12</span>
<span class=t style="left:1678.00px;top:246.50px;font-size:12px;line-height:17px;font-weight:400;color:#1d5fd0;">12</span>
<span class=t style="left:1777.60px;top:246.50px;font-size:12px;line-height:17px;font-weight:400;color:#1d5fd0;">0</span>
<div class=b style='left:1275px;top:275.70px;width:14px;height:14px;border:1.6px solid #3f7fe6;border-radius:2.5px;background:#fff;'></div>
<span class=t style="left:1374.00px;top:274.50px;font-size:12px;line-height:17px;font-weight:400;color:#1a1a1a;transform:scaleX(0.9000);">EN_SYSO</span>
<span class=t style="left:1574.50px;top:274.50px;font-size:12px;line-height:17px;font-weight:400;color:#202020;">12</span>
<span class=t style="left:1678.00px;top:274.50px;font-size:12px;line-height:17px;font-weight:400;color:#1d5fd0;">12</span>
<span class=t style="left:1777.60px;top:274.50px;font-size:12px;line-height:17px;font-weight:400;color:#1d5fd0;">0</span>
<div class=b style='left:1275px;top:303.70px;width:14px;height:14px;border:1.6px solid #3f7fe6;border-radius:2.5px;background:#fff;'></div>
<span class=t style="left:1374.00px;top:302.50px;font-size:12px;line-height:17px;font-weight:400;color:#1a1a1a;transform:scaleX(0.9000);">EN_CO</span>
<span class=t style="left:1574.50px;top:302.50px;font-size:12px;line-height:17px;font-weight:400;color:#202020;">11</span>
<span class=t style="left:1678.00px;top:302.50px;font-size:12px;line-height:17px;font-weight:400;color:#1d5fd0;">11</span>
<span class=t style="left:1777.60px;top:302.50px;font-size:12px;line-height:17px;font-weight:400;color:#1d5fd0;">0</span>
<div class=b style='left:1275px;top:331.70px;width:14px;height:14px;border:1.6px solid #3f7fe6;border-radius:2.5px;background:#fff;'></div>
<span class=t style="left:1374.00px;top:330.50px;font-size:12px;line-height:17px;font-weight:400;color:#1a1a1a;transform:scaleX(0.9000);">EN_DEV</span>
<span class=t style="left:1574.50px;top:330.50px;font-size:12px;line-height:17px;font-weight:400;color:#202020;">10</span>
<span class=t style="left:1678.00px;top:330.50px;font-size:12px;line-height:17px;font-weight:400;color:#1d5fd0;">10</span>
<span class=t style="left:1777.60px;top:330.50px;font-size:12px;line-height:17px;font-weight:400;color:#1d5fd0;">0</span>
<div class=b style='left:1275px;top:359.70px;width:14px;height:14px;border:1.6px solid #3f7fe6;border-radius:2.5px;background:#fff;'></div>
<span class=t style="left:1374.00px;top:358.50px;font-size:12px;line-height:17px;font-weight:400;color:#1a1a1a;transform:scaleX(0.9000);">EN_PLA</span>
<span class=t style="left:1574.50px;top:358.50px;font-size:12px;line-height:17px;font-weight:400;color:#202020;">10</span>
<span class=t style="left:1678.00px;top:358.50px;font-size:12px;line-height:17px;font-weight:400;color:#1d5fd0;">10</span>
<span class=t style="left:1777.60px;top:358.50px;font-size:12px;line-height:17px;font-weight:400;color:#1d5fd0;">0</span>
<div class=b style='left:1275px;top:387.70px;width:14px;height:14px;border:1.6px solid #3f7fe6;border-radius:2.5px;background:#fff;'></div>
<span class=t style="left:1374.00px;top:386.50px;font-size:12px;line-height:17px;font-weight:400;color:#1a1a1a;transform:scaleX(0.9000);">EN_TRATEAM</span>
<span class=t style="left:1574.50px;top:386.50px;font-size:12px;line-height:17px;font-weight:400;color:#202020;">10</span>
<span class=t style="left:1678.00px;top:386.50px;font-size:12px;line-height:17px;font-weight:400;color:#1d5fd0;">10</span>
<span class=t style="left:1777.60px;top:386.50px;font-size:12px;line-height:17px;font-weight:400;color:#1d5fd0;">0</span>
<div class=b style='left:1275px;top:416.70px;width:14px;height:14px;border:1.6px solid #3f7fe6;border-radius:2.5px;background:#fff;'></div>
<span class=t style="left:1374.00px;top:414.50px;font-size:12px;line-height:17px;font-weight:400;color:#1a1a1a;transform:scaleX(0.9000);">EN_WARTEAM</span>
<span class=t style="left:1574.50px;top:414.50px;font-size:12px;line-height:17px;font-weight:400;color:#202020;">10</span>
<span class=t style="left:1678.00px;top:414.50px;font-size:12px;line-height:17px;font-weight:400;color:#1d5fd0;">10</span>
<span class=t style="left:1777.60px;top:414.50px;font-size:12px;line-height:17px;font-weight:400;color:#1d5fd0;">0</span>
<div class=b style='left:1275px;top:444.70px;width:14px;height:14px;border:1.6px solid #3f7fe6;border-radius:2.5px;background:#fff;'></div>
<span class=t style="left:1374.00px;top:442.50px;font-size:12px;line-height:17px;font-weight:400;color:#1a1a1a;transform:scaleX(0.9000);">EN_KWATEAM</span>
<span class=t style="left:1574.50px;top:442.50px;font-size:12px;line-height:17px;font-weight:400;color:#202020;">9</span>
<span class=t style="left:1678.00px;top:442.50px;font-size:12px;line-height:17px;font-weight:400;color:#1d5fd0;">9</span>
<span class=t style="left:1777.60px;top:442.50px;font-size:12px;line-height:17px;font-weight:400;color:#1d5fd0;">0</span>
<div class=b style='left:1275px;top:472.70px;width:14px;height:14px;border:1.6px solid #3f7fe6;border-radius:2.5px;background:#fff;'></div>
<span class=t style="left:1374.00px;top:471.50px;font-size:12px;line-height:17px;font-weight:400;color:#1a1a1a;transform:scaleX(0.9000);">EN_PO</span>
<span class=t style="left:1574.50px;top:471.50px;font-size:12px;line-height:17px;font-weight:400;color:#202020;">9</span>
<span class=t style="left:1678.00px;top:471.50px;font-size:12px;line-height:17px;font-weight:400;color:#1d5fd0;">9</span>
<span class=t style="left:1777.60px;top:471.50px;font-size:12px;line-height:17px;font-weight:400;color:#1d5fd0;">0</span>
<div class=b style='left:1275px;top:500.70px;width:14px;height:14px;border:1.6px solid #3f7fe6;border-radius:2.5px;background:#fff;'></div>
<span class=t style="left:1374.00px;top:499.50px;font-size:12px;line-height:17px;font-weight:400;color:#1a1a1a;transform:scaleX(0.9000);">EN_ASS</span>
<span class=t style="left:1574.50px;top:499.50px;font-size:12px;line-height:17px;font-weight:400;color:#202020;">8</span>
<span class=t style="left:1678.00px;top:499.50px;font-size:12px;line-height:17px;font-weight:400;color:#1d5fd0;">8</span>
<span class=t style="left:1777.60px;top:499.50px;font-size:12px;line-height:17px;font-weight:400;color:#1d5fd0;">0</span>
<div class=b style='left:1275px;top:528.70px;width:14px;height:14px;border:1.6px solid #3f7fe6;border-radius:2.5px;background:#fff;'></div>
<span class=t style="left:1374.00px;top:527.50px;font-size:12px;line-height:17px;font-weight:400;color:#1a1a1a;transform:scaleX(0.9000);">EN_DEVTEAM</span>
<span class=t style="left:1574.50px;top:527.50px;font-size:12px;line-height:17px;font-weight:400;color:#202020;">8</span>
<span class=t style="left:1678.00px;top:527.50px;font-size:12px;line-height:17px;font-weight:400;color:#1d5fd0;">8</span>
<span class=t style="left:1777.60px;top:527.50px;font-size:12px;line-height:17px;font-weight:400;color:#1d5fd0;">0</span>
<div class=b style='left:1275px;top:556.70px;width:14px;height:14px;border:1.6px solid #3f7fe6;border-radius:2.5px;background:#fff;'></div>
<span class=t style="left:1374.00px;top:555.50px;font-size:12px;line-height:17px;font-weight:400;color:#1a1a1a;transform:scaleX(0.9000);">EN_ICTTEAM</span>
<span class=t style="left:1574.50px;top:555.50px;font-size:12px;line-height:17px;font-weight:400;color:#202020;">8</span>
<span class=t style="left:1678.00px;top:555.50px;font-size:12px;line-height:17px;font-weight:400;color:#1d5fd0;">8</span>
<span class=t style="left:1777.60px;top:555.50px;font-size:12px;line-height:17px;font-weight:400;color:#1d5fd0;">0</span>
<div class=b style='left:1275px;top:584.70px;width:14px;height:14px;border:1.6px solid #3f7fe6;border-radius:2.5px;background:#fff;'></div>
<span class=t style="left:1374.00px;top:583.50px;font-size:12px;line-height:17px;font-weight:400;color:#1a1a1a;transform:scaleX(0.9000);">EN_SAB</span>
<span class=t style="left:1574.50px;top:583.50px;font-size:12px;line-height:17px;font-weight:400;color:#202020;">8</span>
<span class=t style="left:1678.00px;top:583.50px;font-size:12px;line-height:17px;font-weight:400;color:#1d5fd0;">8</span>
<span class=t style="left:1777.60px;top:583.50px;font-size:12px;line-height:17px;font-weight:400;color:#1d5fd0;">0</span>
<div class=b style='left:1275px;top:612.70px;width:14px;height:14px;border:1.6px solid #3f7fe6;border-radius:2.5px;background:#fff;'></div>
<span class=t style="left:1374.00px;top:611.50px;font-size:12px;line-height:17px;font-weight:400;color:#1a1a1a;transform:scaleX(0.9000);">EN_HPD</span>
<span class=t style="left:1574.50px;top:611.50px;font-size:12px;line-height:17px;font-weight:400;color:#202020;">7</span>
<span class=t style="left:1678.00px;top:611.50px;font-size:12px;line-height:17px;font-weight:400;color:#1d5fd0;">7</span>
<span class=t style="left:1777.60px;top:611.50px;font-size:12px;line-height:17px;font-weight:400;color:#1d5fd0;">0</span>
<div class=b style='left:1275px;top:640.70px;width:14px;height:14px;border:1.6px solid #3f7fe6;border-radius:2.5px;background:#fff;'></div>
<span class=t style="left:1374.00px;top:639.50px;font-size:12px;line-height:17px;font-weight:400;color:#1a1a1a;transform:scaleX(0.9000);">EN_HRTEAM</span>
<span class=t style="left:1574.50px;top:639.50px;font-size:12px;line-height:17px;font-weight:400;color:#202020;">7</span>
<span class=t style="left:1678.00px;top:639.50px;font-size:12px;line-height:17px;font-weight:400;color:#1d5fd0;">7</span>
<span class=t style="left:1777.60px;top:639.50px;font-size:12px;line-height:17px;font-weight:400;color:#1d5fd0;">0</span>
<div class=b style='left:1275px;top:668.70px;width:14px;height:14px;border:1.6px solid #3f7fe6;border-radius:2.5px;background:#fff;'></div>
<span class=t style="left:1374.00px;top:667.50px;font-size:12px;line-height:17px;font-weight:400;color:#1a1a1a;transform:scaleX(0.9000);">EN_INK</span>
<span class=t style="left:1574.50px;top:667.50px;font-size:12px;line-height:17px;font-weight:400;color:#202020;">7</span>
<span class=t style="left:1678.00px;top:667.50px;font-size:12px;line-height:17px;font-weight:400;color:#1d5fd0;">7</span>
<span class=t style="left:1777.60px;top:667.50px;font-size:12px;line-height:17px;font-weight:400;color:#1d5fd0;">0</span>
<div class=b style='left:1275px;top:696.70px;width:14px;height:14px;border:1.6px solid #3f7fe6;border-radius:2.5px;background:#fff;'></div>
<span class=t style="left:1374.00px;top:695.50px;font-size:12px;line-height:17px;font-weight:400;color:#1a1a1a;transform:scaleX(0.9000);">EN_INKTEAM</span>
<span class=t style="left:1574.50px;top:695.50px;font-size:12px;line-height:17px;font-weight:400;color:#202020;">7</span>
<span class=t style="left:1678.00px;top:695.50px;font-size:12px;line-height:17px;font-weight:400;color:#1d5fd0;">7</span>
<span class=t style="left:1777.60px;top:695.50px;font-size:12px;line-height:17px;font-weight:400;color:#1d5fd0;">0</span>
<div class=b style='left:1275px;top:724.70px;width:14px;height:14px;border:1.6px solid #3f7fe6;border-radius:2.5px;background:#fff;'></div>
<span class=t style="left:1374.00px;top:723.50px;font-size:12px;line-height:17px;font-weight:400;color:#1a1a1a;transform:scaleX(0.9000);">EN_KWA</span>
<span class=t style="left:1574.50px;top:723.50px;font-size:12px;line-height:17px;font-weight:400;color:#202020;">7</span>
<span class=t style="left:1678.00px;top:723.50px;font-size:12px;line-height:17px;font-weight:400;color:#1d5fd0;">7</span>
<span class=t style="left:1777.60px;top:723.50px;font-size:12px;line-height:17px;font-weight:400;color:#1d5fd0;">0</span>
<div class=b style='left:1275px;top:753.70px;width:14px;height:14px;border:1.6px solid #3f7fe6;border-radius:2.5px;background:#fff;'></div>
<span class=t style="left:1374.00px;top:751.50px;font-size:12px;line-height:17px;font-weight:400;color:#1a1a1a;transform:scaleX(0.9000);">EN_WAR</span>
<span class=t style="left:1574.50px;top:751.50px;font-size:12px;line-height:17px;font-weight:400;color:#202020;">7</span>
<span class=t style="left:1678.00px;top:751.50px;font-size:12px;line-height:17px;font-weight:400;color:#1d5fd0;">7</span>
<span class=t style="left:1777.60px;top:751.50px;font-size:12px;line-height:17px;font-weight:400;color:#1d5fd0;">0</span>
<div class=b style='left:1275px;top:781.70px;width:14px;height:14px;border:1.6px solid #3f7fe6;border-radius:2.5px;background:#fff;'></div>
<span class=t style="left:1374.00px;top:779.50px;font-size:12px;line-height:17px;font-weight:400;color:#1a1a1a;transform:scaleX(0.9000);">EN</span>
<span class=t style="left:1574.50px;top:779.50px;font-size:12px;line-height:17px;font-weight:400;color:#202020;">6</span>
<span class=t style="left:1678.00px;top:779.50px;font-size:12px;line-height:17px;font-weight:400;color:#1d5fd0;">6</span>
<span class=t style="left:1777.60px;top:779.50px;font-size:12px;line-height:17px;font-weight:400;color:#1d5fd0;">0</span>
<div class=b style='left:1275px;top:809.70px;width:14px;height:14px;border:1.6px solid #3f7fe6;border-radius:2.5px;background:#fff;'></div>
<span class=t style="left:1374.00px;top:807.50px;font-size:12px;line-height:17px;font-weight:400;color:#1a1a1a;transform:scaleX(0.9000);">EN_ASSTEAM</span>
<span class=t style="left:1574.50px;top:807.50px;font-size:12px;line-height:17px;font-weight:400;color:#202020;">6</span>
<span class=t style="left:1678.00px;top:807.50px;font-size:12px;line-height:17px;font-weight:400;color:#1d5fd0;">6</span>
<span class=t style="left:1777.60px;top:807.50px;font-size:12px;line-height:17px;font-weight:400;color:#1d5fd0;">0</span>
<div class=b style='left:1275px;top:837.70px;width:14px;height:14px;border:1.6px solid #3f7fe6;border-radius:2.5px;background:#fff;'></div>
<span class=t style="left:1374.00px;top:836.50px;font-size:12px;line-height:17px;font-weight:400;color:#1a1a1a;transform:scaleX(0.9000);">EN_DESG</span>
<span class=t style="left:1574.50px;top:836.50px;font-size:12px;line-height:17px;font-weight:400;color:#202020;">6</span>
<span class=t style="left:1678.00px;top:836.50px;font-size:12px;line-height:17px;font-weight:400;color:#1d5fd0;">6</span>
<span class=t style="left:1777.60px;top:836.50px;font-size:12px;line-height:17px;font-weight:400;color:#1d5fd0;">0</span>
<div class=b style='left:1275px;top:865.70px;width:14px;height:14px;border:1.6px solid #3f7fe6;border-radius:2.5px;background:#fff;'></div>
<span class=t style="left:1374.00px;top:864.50px;font-size:12px;line-height:17px;font-weight:400;color:#1a1a1a;transform:scaleX(0.9000);">EN_MAR</span>
<span class=t style="left:1574.50px;top:864.50px;font-size:12px;line-height:17px;font-weight:400;color:#202020;">6</span>
<span class=t style="left:1678.00px;top:864.50px;font-size:12px;line-height:17px;font-weight:400;color:#1d5fd0;">6</span>
<span class=t style="left:1777.60px;top:864.50px;font-size:12px;line-height:17px;font-weight:400;color:#1d5fd0;">0</span>
<div class=b style='left:1275px;top:893.70px;width:14px;height:14px;border:1.6px solid #3f7fe6;border-radius:2.5px;background:#fff;clip-path:inset(0 0 5.2px 0);'></div>
<span class=t style="left:1374.00px;top:892.50px;font-size:12px;line-height:17px;font-weight:400;color:#1a1a1a;transform:scaleX(0.9000);clip-path:inset(0 0 7.5px 0);">EN_MARTEAM</span>
<span class=t style="left:1574.50px;top:892.50px;font-size:12px;line-height:17px;font-weight:400;color:#202020;clip-path:inset(0 0 7.5px 0);">6</span>
<span class=t style="left:1678.00px;top:892.50px;font-size:12px;line-height:17px;font-weight:400;color:#1d5fd0;clip-path:inset(0 0 7.5px 0);">6</span>
<span class=t style="left:1777.60px;top:892.50px;font-size:12px;line-height:17px;font-weight:400;color:#1d5fd0;clip-path:inset(0 0 7.5px 0);">0</span>
</div>
<div id="ov"></div>
<div id="top">
<div class=b style='left:308px;top:129px;width:945px;height:784px;border-radius:3px;background:rgba(0,0,0,0.04)'></div>
<div class=b style='left:309px;top:130px;width:943px;height:782px;border-radius:2px;background:#fff;border:1px solid #e6e6e6'></div>
<span class=t style="left:320.28px;top:145.00px;font-size:14px;line-height:20px;font-weight:700;color:#10163a;transform:scaleX(0.9895);">Groups</span>
<div class=b style='left:387.2px;top:143.6px;width:144.40000000000003px;height:23.200000000000017px;border:1.5px solid #6aa3f2;border-radius:3px;background:#fff'></div>
<span class=t style="left:394.46px;top:148.50px;font-size:11px;line-height:15px;font-weight:400;color:#777;transform:scaleX(0.8626);">Search...</span>
<svg class=ic style="left:513.8px;top:150px" width="10.5" height="10.5" viewBox="0 0 11.5 12"><path d='M0.2 0 H11.3 Q11.7 0 11.5 0.4 L7 5.6 V11.3 Q7 12 6.4 11.6 L4.8 10.4 Q4.5 10.2 4.5 9.8 V5.6 L0 0.4 Q-0.2 0 0.2 0Z' fill='#1f6fe8'/></svg>
<svg class=ic style="left:1189px;top:153.5px" width="12.5" height="7" viewBox="0 0 12.5 7"><path d='M0 3.5 L3.5 0.3 V2.7 H9 V0.3 L12.5 3.5 L9 6.7 V4.3 H3.5 V6.7Z' fill='#2f7de1'/></svg>
<span class=t style="left:1204.92px;top:149.50px;font-size:12px;line-height:17px;font-weight:400;color:#2f7de1;transform:scaleX(0.9090);">Resize</span>
<div class=b style='left:320.5px;top:178px;width:921.0999999999999px;height:725px;border:1px solid #ccd1d5;border-radius:2px;overflow:hidden'></div>
<div class=b style='left:321.5px;top:179px;width:919.0999999999999px;height:34px;background:#f4f5f5;border-bottom:1px solid #cdd2d6'></div>
<div class=b style='left:495.7px;top:188px;width:1.5px;height:15.5px;background:#d8d8d8'></div>
<div class=b style='left:595.9px;top:188px;width:1.5px;height:15.5px;background:#d8d8d8'></div>
<div class=b style='left:696.6px;top:188px;width:1.5px;height:15.5px;background:#d8d8d8'></div>
<div class=b style='left:797.0px;top:188px;width:1.5px;height:15.5px;background:#d8d8d8'></div>
<div class=b style='left:897.0px;top:188px;width:1.5px;height:15.5px;background:#d8d8d8'></div>
<div class=b style='left:997.5px;top:188px;width:1.5px;height:15.5px;background:#d8d8d8'></div>
<div class=b style='left:1087.8px;top:188px;width:1.5px;height:15.5px;background:#d8d8d8'></div>
<div class=b style='left:1178.4px;top:188px;width:1.5px;height:15.5px;background:#d8d8d8'></div>
<span class=t style="left:333.54px;top:187.50px;font-size:12px;line-height:17px;font-weight:400;color:#5f6266;transform:scaleX(1.0179);">Group name</span>
<span class=t style="left:509.18px;top:187.50px;font-size:12px;line-height:17px;font-weight:400;color:#5f6266;transform:scaleX(1.0265);"># members</span>
<span class=t style="left:609.72px;top:187.50px;font-size:12px;line-height:17px;font-weight:400;color:#5f6266;transform:scaleX(1.0164);">distance</span>
<span class=t style="left:709.28px;top:187.50px;font-size:12px;line-height:17px;font-weight:400;color:#5f6266;transform:scaleX(1.0195);"># matches</span>
<span class=t style="left:810.00px;top:187.50px;font-size:12px;line-height:17px;font-weight:400;color:#5f6266;transform:scaleX(1.0438);"># add</span>
<span class=t style="left:910.10px;top:187.50px;font-size:12px;line-height:17px;font-weight:400;color:#5f6266;transform:scaleX(1.0263);"># remove</span>
<span class=t style="left:1010.10px;top:187.50px;font-size:12px;line-height:17px;font-weight:400;color:#5f6266;transform:scaleX(1.0240);"># roles</span>
<span class=t style="left:1100.55px;top:187.50px;font-size:12px;line-height:17px;font-weight:400;color:#5f6266;transform:scaleX(1.0325);">Δ roles</span>
<div class=b style='left:1224px;top:213px;width:16.59999999999991px;height:689px;background:#f1f1f1'></div>
<div class=b style='left:1225px;top:229.5px;width:14px;height:413.5px;background:#c1c1c1'></div>
<svg class=ic style="left:1228.6px;top:220px" width="7.4" height="4" viewBox="0 0 7.4 4"><path d='M0 4 H7.4 L3.7 0Z' fill='#a3a3a3'/></svg>
<svg class=ic style="left:1228.6px;top:890.5px" width="7.6" height="4.3" viewBox="0 0 7.6 4.3"><path d='M0 0 H7.6 L3.8 4.3Z' fill='#505050'/></svg>
<div class=b style='left:321px;top:213.00px;width:858.5px;height:28px;background:#d4e4f8;border-bottom:1px solid #b8d3f3;clip-path:inset(0 0 0.00px 0)'></div>
<div class=b style='left:321px;top:241.00px;width:858.5px;height:28px;background:#fafbfd;border-bottom:1px solid #dcdfe2;clip-path:inset(0 0 0.00px 0)'></div>
<div class=b style='left:321px;top:269.00px;width:858.5px;height:28px;background:#ffffff;border-bottom:1px solid #dcdfe2;clip-path:inset(0 0 0.00px 0)'></div>
<div class=b style='left:321px;top:297.00px;width:858.5px;height:28px;background:#fafbfd;border-bottom:1px solid #dcdfe2;clip-path:inset(0 0 0.00px 0)'></div>
<div class=b style='left:321px;top:325.00px;width:858.5px;height:28px;background:#ffffff;border-bottom:1px solid #dcdfe2;clip-path:inset(0 0 0.00px 0)'></div>
<div class=b style='left:321px;top:353.00px;width:858.5px;height:28px;background:#fafbfd;border-bottom:1px solid #dcdfe2;clip-path:inset(0 0 0.00px 0)'></div>
<div class=b style='left:321px;top:381.00px;width:858.5px;height:29px;background:#ffffff;border-bottom:1px solid #dcdfe2;clip-path:inset(0 0 0.00px 0)'></div>
<div class=b style='left:321px;top:410.00px;width:858.5px;height:28px;background:#fafbfd;border-bottom:1px solid #dcdfe2;clip-path:inset(0 0 0.00px 0)'></div>
<div class=b style='left:321px;top:438.00px;width:858.5px;height:28px;background:#ffffff;border-bottom:1px solid #dcdfe2;clip-path:inset(0 0 0.00px 0)'></div>
<div class=b style='left:321px;top:466.00px;width:858.5px;height:28px;background:#fafbfd;border-bottom:1px solid #dcdfe2;clip-path:inset(0 0 0.00px 0)'></div>
<div class=b style='left:321px;top:494.00px;width:858.5px;height:28px;background:#ffffff;border-bottom:1px solid #dcdfe2;clip-path:inset(0 0 0.00px 0)'></div>
<div class=b style='left:321px;top:522.00px;width:858.5px;height:28px;background:#fafbfd;border-bottom:1px solid #dcdfe2;clip-path:inset(0 0 0.00px 0)'></div>
<div class=b style='left:321px;top:550.00px;width:858.5px;height:28px;background:#ffffff;border-bottom:1px solid #dcdfe2;clip-path:inset(0 0 0.00px 0)'></div>
<div class=b style='left:321px;top:578.00px;width:858.5px;height:28px;background:#fafbfd;border-bottom:1px solid #dcdfe2;clip-path:inset(0 0 0.00px 0)'></div>
<div class=b style='left:321px;top:606.00px;width:858.5px;height:28px;background:#ffffff;border-bottom:1px solid #dcdfe2;clip-path:inset(0 0 0.00px 0)'></div>
<div class=b style='left:321px;top:634.00px;width:858.5px;height:28px;background:#fafbfd;border-bottom:1px solid #dcdfe2;clip-path:inset(0 0 0.00px 0)'></div>
<div class=b style='left:321px;top:662.00px;width:858.5px;height:28px;background:#ffffff;border-bottom:1px solid #dcdfe2;clip-path:inset(0 0 0.00px 0)'></div>
<div class=b style='left:321px;top:690.00px;width:858.5px;height:28px;background:#fafbfd;border-bottom:1px solid #dcdfe2;clip-path:inset(0 0 0.00px 0)'></div>
<div class=b style='left:321px;top:718.00px;width:858.5px;height:29px;background:#ffffff;border-bottom:1px solid #dcdfe2;clip-path:inset(0 0 0.00px 0)'></div>
<div class=b style='left:321px;top:747.00px;width:858.5px;height:28px;background:#fafbfd;border-bottom:1px solid #dcdfe2;clip-path:inset(0 0 0.00px 0)'></div>
<div class=b style='left:321px;top:775.00px;width:858.5px;height:28px;background:#ffffff;border-bottom:1px solid #dcdfe2;clip-path:inset(0 0 0.00px 0)'></div>
<div class=b style='left:321px;top:803.00px;width:858.5px;height:28px;background:#fafbfd;border-bottom:1px solid #dcdfe2;clip-path:inset(0 0 0.00px 0)'></div>
<div class=b style='left:321px;top:831.00px;width:858.5px;height:28px;background:#ffffff;border-bottom:1px solid #dcdfe2;clip-path:inset(0 0 0.00px 0)'></div>
<div class=b style='left:321px;top:859.00px;width:858.5px;height:28px;background:#fafbfd;border-bottom:1px solid #dcdfe2;clip-path:inset(0 0 0.00px 0)'></div>
<div class=b style='left:321px;top:887.00px;width:858.5px;height:28px;background:#ffffff;border-bottom:1px solid #dcdfe2;clip-path:inset(0 0 12.50px 0)'></div>
<span class=t style="left:333.40px;top:218.50px;font-size:12px;line-height:17px;font-weight:400;color:#303030;transform:scaleX(0.8650);">DEPGRP_EN_INK</span>
<span class=t style="left:509.00px;top:218.50px;font-size:12px;line-height:17px;font-weight:400;color:#303030;">200</span>
<span class=t style="left:612.00px;top:218.50px;font-size:12px;line-height:17px;font-weight:400;color:#3b73c4;">200</span>
<span class=t style="left:712.00px;top:218.50px;font-size:12px;line-height:17px;font-weight:400;color:#2d62b8;text-decoration:underline;text-underline-offset:1.5px">0</span>
<span class=t style="left:812.50px;top:218.50px;font-size:12px;line-height:17px;font-weight:400;color:#3b73c4;">0</span>
<span class=t style="left:913.00px;top:218.50px;font-size:12px;line-height:17px;font-weight:400;color:#3b73c4;">200</span>
<span class=t style="left:1013.00px;top:218.50px;font-size:12px;line-height:17px;font-weight:400;color:#303030;">0</span>
<span class=t style="left:1102.50px;top:218.50px;font-size:12px;line-height:17px;font-weight:400;color:#303030;">1</span>
<span class=t style="left:333.40px;top:246.50px;font-size:12px;line-height:17px;font-weight:400;color:#303030;transform:scaleX(0.8650);">DEPGRP_EN_ICTTEAM</span>
<span class=t style="left:509.00px;top:246.50px;font-size:12px;line-height:17px;font-weight:400;color:#303030;">0</span>
<span class=t style="left:612.00px;top:246.50px;font-size:12px;line-height:17px;font-weight:400;color:#3b73c4;">0</span>
<span class=t style="left:712.00px;top:246.50px;font-size:12px;line-height:17px;font-weight:400;color:#2d62b8;text-decoration:underline;text-underline-offset:1.5px">0</span>
<span class=t style="left:812.50px;top:246.50px;font-size:12px;line-height:17px;font-weight:400;color:#3b73c4;">0</span>
<span class=t style="left:913.00px;top:246.50px;font-size:12px;line-height:17px;font-weight:400;color:#3b73c4;">0</span>
<span class=t style="left:1013.00px;top:246.50px;font-size:12px;line-height:17px;font-weight:400;color:#303030;">0</span>
<span class=t style="left:1102.50px;top:246.50px;font-size:12px;line-height:17px;font-weight:400;color:#303030;">1</span>
<span class=t style="left:333.40px;top:274.50px;font-size:12px;line-height:17px;font-weight:400;color:#303030;transform:scaleX(0.8650);">DEPGRP_EN_KWA</span>
<span class=t style="left:509.00px;top:274.50px;font-size:12px;line-height:17px;font-weight:400;color:#303030;">0</span>
<span class=t style="left:612.00px;top:274.50px;font-size:12px;line-height:17px;font-weight:400;color:#3b73c4;">0</span>
<span class=t style="left:712.00px;top:274.50px;font-size:12px;line-height:17px;font-weight:400;color:#2d62b8;text-decoration:underline;text-underline-offset:1.5px">0</span>
<span class=t style="left:812.50px;top:274.50px;font-size:12px;line-height:17px;font-weight:400;color:#3b73c4;">0</span>
<span class=t style="left:913.00px;top:274.50px;font-size:12px;line-height:17px;font-weight:400;color:#3b73c4;">0</span>
<span class=t style="left:1013.00px;top:274.50px;font-size:12px;line-height:17px;font-weight:400;color:#303030;">0</span>
<span class=t style="left:1102.50px;top:274.50px;font-size:12px;line-height:17px;font-weight:400;color:#303030;">1</span>
<span class=t style="left:333.40px;top:302.50px;font-size:12px;line-height:17px;font-weight:400;color:#303030;transform:scaleX(0.8650);">DEPGRP_EN_PLA</span>
<span class=t style="left:509.00px;top:302.50px;font-size:12px;line-height:17px;font-weight:400;color:#303030;">0</span>
<span class=t style="left:612.00px;top:302.50px;font-size:12px;line-height:17px;font-weight:400;color:#3b73c4;">0</span>
<span class=t style="left:712.00px;top:302.50px;font-size:12px;line-height:17px;font-weight:400;color:#2d62b8;text-decoration:underline;text-underline-offset:1.5px">0</span>
<span class=t style="left:812.50px;top:302.50px;font-size:12px;line-height:17px;font-weight:400;color:#3b73c4;">0</span>
<span class=t style="left:913.00px;top:302.50px;font-size:12px;line-height:17px;font-weight:400;color:#3b73c4;">0</span>
<span class=t style="left:1013.00px;top:302.50px;font-size:12px;line-height:17px;font-weight:400;color:#303030;">0</span>
<span class=t style="left:1102.50px;top:302.50px;font-size:12px;line-height:17px;font-weight:400;color:#303030;">1</span>
<span class=t style="left:333.40px;top:330.50px;font-size:12px;line-height:17px;font-weight:400;color:#303030;transform:scaleX(0.8650);">DEPGRP_EN_SAI</span>
<span class=t style="left:509.00px;top:330.50px;font-size:12px;line-height:17px;font-weight:400;color:#303030;">0</span>
<span class=t style="left:612.00px;top:330.50px;font-size:12px;line-height:17px;font-weight:400;color:#3b73c4;">0</span>
<span class=t style="left:712.00px;top:330.50px;font-size:12px;line-height:17px;font-weight:400;color:#2d62b8;text-decoration:underline;text-underline-offset:1.5px">0</span>
<span class=t style="left:812.50px;top:330.50px;font-size:12px;line-height:17px;font-weight:400;color:#3b73c4;">0</span>
<span class=t style="left:913.00px;top:330.50px;font-size:12px;line-height:17px;font-weight:400;color:#3b73c4;">0</span>
<span class=t style="left:1013.00px;top:330.50px;font-size:12px;line-height:17px;font-weight:400;color:#303030;">0</span>
<span class=t style="left:1102.50px;top:330.50px;font-size:12px;line-height:17px;font-weight:400;color:#303030;">1</span>
<span class=t style="left:333.40px;top:358.50px;font-size:12px;line-height:17px;font-weight:400;color:#303030;transform:scaleX(0.8650);">DEPGRP_EN_SABTEAM</span>
<span class=t style="left:509.00px;top:358.50px;font-size:12px;line-height:17px;font-weight:400;color:#303030;">0</span>
<span class=t style="left:612.00px;top:358.50px;font-size:12px;line-height:17px;font-weight:400;color:#3b73c4;">0</span>
<span class=t style="left:712.00px;top:358.50px;font-size:12px;line-height:17px;font-weight:400;color:#2d62b8;text-decoration:underline;text-underline-offset:1.5px">0</span>
<span class=t style="left:812.50px;top:358.50px;font-size:12px;line-height:17px;font-weight:400;color:#3b73c4;">0</span>
<span class=t style="left:913.00px;top:358.50px;font-size:12px;line-height:17px;font-weight:400;color:#3b73c4;">0</span>
<span class=t style="left:1013.00px;top:358.50px;font-size:12px;line-height:17px;font-weight:400;color:#303030;">0</span>
<span class=t style="left:1102.50px;top:358.50px;font-size:12px;line-height:17px;font-weight:400;color:#303030;">1</span>
<span class=t style="left:333.40px;top:386.50px;font-size:12px;line-height:17px;font-weight:400;color:#303030;transform:scaleX(0.8650);">DEPGRP_EN_DESG</span>
<span class=t style="left:509.00px;top:386.50px;font-size:12px;line-height:17px;font-weight:400;color:#303030;">0</span>
<span class=t style="left:612.00px;top:386.50px;font-size:12px;line-height:17px;font-weight:400;color:#3b73c4;">0</span>
<span class=t style="left:712.00px;top:386.50px;font-size:12px;line-height:17px;font-weight:400;color:#2d62b8;text-decoration:underline;text-underline-offset:1.5px">0</span>
<span class=t style="left:812.50px;top:386.50px;font-size:12px;line-height:17px;font-weight:400;color:#3b73c4;">0</span>
<span class=t style="left:913.00px;top:386.50px;font-size:12px;line-height:17px;font-weight:400;color:#3b73c4;">0</span>
<span class=t style="left:1013.00px;top:386.50px;font-size:12px;line-height:17px;font-weight:400;color:#303030;">0</span>
<span class=t style="left:1102.50px;top:386.50px;font-size:12px;line-height:17px;font-weight:400;color:#303030;">1</span>
<span class=t style="left:333.40px;top:414.50px;font-size:12px;line-height:17px;font-weight:400;color:#303030;transform:scaleX(0.8650);">DEPGRP_EN_SAMA</span>
<span class=t style="left:509.00px;top:414.50px;font-size:12px;line-height:17px;font-weight:400;color:#303030;">0</span>
<span class=t style="left:612.00px;top:414.50px;font-size:12px;line-height:17px;font-weight:400;color:#3b73c4;">0</span>
<span class=t style="left:712.00px;top:414.50px;font-size:12px;line-height:17px;font-weight:400;color:#2d62b8;text-decoration:underline;text-underline-offset:1.5px">0</span>
<span class=t style="left:812.50px;top:414.50px;font-size:12px;line-height:17px;font-weight:400;color:#3b73c4;">0</span>
<span class=t style="left:913.00px;top:414.50px;font-size:12px;line-height:17px;font-weight:400;color:#3b73c4;">0</span>
<span class=t style="left:1013.00px;top:414.50px;font-size:12px;line-height:17px;font-weight:400;color:#303030;">0</span>
<span class=t style="left:1102.50px;top:414.50px;font-size:12px;line-height:17px;font-weight:400;color:#303030;">1</span>
<span class=t style="left:333.40px;top:442.50px;font-size:12px;line-height:17px;font-weight:400;color:#303030;transform:scaleX(0.8650);">DEPGRP_EN_TRA</span>
<span class=t style="left:509.00px;top:442.50px;font-size:12px;line-height:17px;font-weight:400;color:#303030;">0</span>
<span class=t style="left:612.00px;top:442.50px;font-size:12px;line-height:17px;font-weight:400;color:#3b73c4;">0</span>
<span class=t style="left:712.00px;top:442.50px;font-size:12px;line-height:17px;font-weight:400;color:#2d62b8;text-decoration:underline;text-underline-offset:1.5px">0</span>
<span class=t style="left:812.50px;top:442.50px;font-size:12px;line-height:17px;font-weight:400;color:#3b73c4;">0</span>
<span class=t style="left:913.00px;top:442.50px;font-size:12px;line-height:17px;font-weight:400;color:#3b73c4;">0</span>
<span class=t style="left:1013.00px;top:442.50px;font-size:12px;line-height:17px;font-weight:400;color:#303030;">0</span>
<span class=t style="left:1102.50px;top:442.50px;font-size:12px;line-height:17px;font-weight:400;color:#303030;">1</span>
<span class=t style="left:333.40px;top:471.50px;font-size:12px;line-height:17px;font-weight:400;color:#303030;transform:scaleX(0.8650);">DEPGRP_EN_SAITEAM</span>
<span class=t style="left:509.00px;top:471.50px;font-size:12px;line-height:17px;font-weight:400;color:#303030;">0</span>
<span class=t style="left:612.00px;top:471.50px;font-size:12px;line-height:17px;font-weight:400;color:#3b73c4;">0</span>
<span class=t style="left:712.00px;top:471.50px;font-size:12px;line-height:17px;font-weight:400;color:#2d62b8;text-decoration:underline;text-underline-offset:1.5px">0</span>
<span class=t style="left:812.50px;top:471.50px;font-size:12px;line-height:17px;font-weight:400;color:#3b73c4;">0</span>
<span class=t style="left:913.00px;top:471.50px;font-size:12px;line-height:17px;font-weight:400;color:#3b73c4;">0</span>
<span class=t style="left:1013.00px;top:471.50px;font-size:12px;line-height:17px;font-weight:400;color:#303030;">0</span>
<span class=t style="left:1102.50px;top:471.50px;font-size:12px;line-height:17px;font-weight:400;color:#303030;">1</span>
<span class=t style="left:333.40px;top:499.50px;font-size:12px;line-height:17px;font-weight:400;color:#303030;transform:scaleX(0.8650);">DEPGRP_EN_DEV</span>
<span class=t style="left:509.00px;top:499.50px;font-size:12px;line-height:17px;font-weight:400;color:#303030;">0</span>
<span class=t style="left:612.00px;top:499.50px;font-size:12px;line-height:17px;font-weight:400;color:#3b73c4;">0</span>
<span class=t style="left:712.00px;top:499.50px;font-size:12px;line-height:17px;font-weight:400;color:#2d62b8;text-decoration:underline;text-underline-offset:1.5px">0</span>
<span class=t style="left:812.50px;top:499.50px;font-size:12px;line-height:17px;font-weight:400;color:#3b73c4;">0</span>
<span class=t style="left:913.00px;top:499.50px;font-size:12px;line-height:17px;font-weight:400;color:#3b73c4;">0</span>
<span class=t style="left:1013.00px;top:499.50px;font-size:12px;line-height:17px;font-weight:400;color:#303030;">0</span>
<span class=t style="left:1102.50px;top:499.50px;font-size:12px;line-height:17px;font-weight:400;color:#303030;">1</span>
<span class=t style="left:333.40px;top:527.50px;font-size:12px;line-height:17px;font-weight:400;color:#303030;transform:scaleX(0.8650);">DEPGRP_EN_DOC</span>
<span class=t style="left:509.00px;top:527.50px;font-size:12px;line-height:17px;font-weight:400;color:#303030;">0</span>
<span class=t style="left:612.00px;top:527.50px;font-size:12px;line-height:17px;font-weight:400;color:#3b73c4;">0</span>
<span class=t style="left:712.00px;top:527.50px;font-size:12px;line-height:17px;font-weight:400;color:#2d62b8;text-decoration:underline;text-underline-offset:1.5px">0</span>
<span class=t style="left:812.50px;top:527.50px;font-size:12px;line-height:17px;font-weight:400;color:#3b73c4;">0</span>
<span class=t style="left:913.00px;top:527.50px;font-size:12px;line-height:17px;font-weight:400;color:#3b73c4;">0</span>
<span class=t style="left:1013.00px;top:527.50px;font-size:12px;line-height:17px;font-weight:400;color:#303030;">0</span>
<span class=t style="left:1102.50px;top:527.50px;font-size:12px;line-height:17px;font-weight:400;color:#303030;">1</span>
<span class=t style="left:333.40px;top:555.50px;font-size:12px;line-height:17px;font-weight:400;color:#303030;transform:scaleX(0.8650);">DEPGRP_EN_SAB</span>
<span class=t style="left:509.00px;top:555.50px;font-size:12px;line-height:17px;font-weight:400;color:#303030;">0</span>
<span class=t style="left:612.00px;top:555.50px;font-size:12px;line-height:17px;font-weight:400;color:#3b73c4;">0</span>
<span class=t style="left:712.00px;top:555.50px;font-size:12px;line-height:17px;font-weight:400;color:#2d62b8;text-decoration:underline;text-underline-offset:1.5px">0</span>
<span class=t style="left:812.50px;top:555.50px;font-size:12px;line-height:17px;font-weight:400;color:#3b73c4;">0</span>
<span class=t style="left:913.00px;top:555.50px;font-size:12px;line-height:17px;font-weight:400;color:#3b73c4;">0</span>
<span class=t style="left:1013.00px;top:555.50px;font-size:12px;line-height:17px;font-weight:400;color:#303030;">0</span>
<span class=t style="left:1102.50px;top:555.50px;font-size:12px;line-height:17px;font-weight:400;color:#303030;">1</span>
<span class=t style="left:333.40px;top:583.50px;font-size:12px;line-height:17px;font-weight:400;color:#303030;transform:scaleX(0.8650);">DEPGRP_EN_SYSO</span>
<span class=t style="left:509.00px;top:583.50px;font-size:12px;line-height:17px;font-weight:400;color:#303030;">0</span>
<span class=t style="left:612.00px;top:583.50px;font-size:12px;line-height:17px;font-weight:400;color:#3b73c4;">0</span>
<span class=t style="left:712.00px;top:583.50px;font-size:12px;line-height:17px;font-weight:400;color:#2d62b8;text-decoration:underline;text-underline-offset:1.5px">0</span>
<span class=t style="left:812.50px;top:583.50px;font-size:12px;line-height:17px;font-weight:400;color:#3b73c4;">0</span>
<span class=t style="left:913.00px;top:583.50px;font-size:12px;line-height:17px;font-weight:400;color:#3b73c4;">0</span>
<span class=t style="left:1013.00px;top:583.50px;font-size:12px;line-height:17px;font-weight:400;color:#303030;">0</span>
<span class=t style="left:1102.50px;top:583.50px;font-size:12px;line-height:17px;font-weight:400;color:#303030;">1</span>
<span class=t style="left:333.40px;top:611.50px;font-size:12px;line-height:17px;font-weight:400;color:#303030;transform:scaleX(0.8650);">DEPGRP_EN_DOCTEAM</span>
<span class=t style="left:509.00px;top:611.50px;font-size:12px;line-height:17px;font-weight:400;color:#303030;">0</span>
<span class=t style="left:612.00px;top:611.50px;font-size:12px;line-height:17px;font-weight:400;color:#3b73c4;">0</span>
<span class=t style="left:712.00px;top:611.50px;font-size:12px;line-height:17px;font-weight:400;color:#2d62b8;text-decoration:underline;text-underline-offset:1.5px">0</span>
<span class=t style="left:812.50px;top:611.50px;font-size:12px;line-height:17px;font-weight:400;color:#3b73c4;">0</span>
<span class=t style="left:913.00px;top:611.50px;font-size:12px;line-height:17px;font-weight:400;color:#3b73c4;">0</span>
<span class=t style="left:1013.00px;top:611.50px;font-size:12px;line-height:17px;font-weight:400;color:#303030;">0</span>
<span class=t style="left:1102.50px;top:611.50px;font-size:12px;line-height:17px;font-weight:400;color:#303030;">1</span>
<span class=t style="left:333.40px;top:639.50px;font-size:12px;line-height:17px;font-weight:400;color:#303030;transform:scaleX(0.8650);">DEPGRP_EN_HPD</span>
<span class=t style="left:509.00px;top:639.50px;font-size:12px;line-height:17px;font-weight:400;color:#303030;">0</span>
<span class=t style="left:612.00px;top:639.50px;font-size:12px;line-height:17px;font-weight:400;color:#3b73c4;">0</span>
<span class=t style="left:712.00px;top:639.50px;font-size:12px;line-height:17px;font-weight:400;color:#2d62b8;text-decoration:underline;text-underline-offset:1.5px">0</span>
<span class=t style="left:812.50px;top:639.50px;font-size:12px;line-height:17px;font-weight:400;color:#3b73c4;">0</span>
<span class=t style="left:913.00px;top:639.50px;font-size:12px;line-height:17px;font-weight:400;color:#3b73c4;">0</span>
<span class=t style="left:1013.00px;top:639.50px;font-size:12px;line-height:17px;font-weight:400;color:#303030;">0</span>
<span class=t style="left:1102.50px;top:639.50px;font-size:12px;line-height:17px;font-weight:400;color:#303030;">1</span>
<span class=t style="left:333.40px;top:667.50px;font-size:12px;line-height:17px;font-weight:400;color:#303030;transform:scaleX(0.8650);">DEPGRP_EN_HPDTEAM</span>
<span class=t style="left:509.00px;top:667.50px;font-size:12px;line-height:17px;font-weight:400;color:#303030;">0</span>
<span class=t style="left:612.00px;top:667.50px;font-size:12px;line-height:17px;font-weight:400;color:#3b73c4;">0</span>
<span class=t style="left:712.00px;top:667.50px;font-size:12px;line-height:17px;font-weight:400;color:#2d62b8;text-decoration:underline;text-underline-offset:1.5px">0</span>
<span class=t style="left:812.50px;top:667.50px;font-size:12px;line-height:17px;font-weight:400;color:#3b73c4;">0</span>
<span class=t style="left:913.00px;top:667.50px;font-size:12px;line-height:17px;font-weight:400;color:#3b73c4;">0</span>
<span class=t style="left:1013.00px;top:667.50px;font-size:12px;line-height:17px;font-weight:400;color:#303030;">0</span>
<span class=t style="left:1102.50px;top:667.50px;font-size:12px;line-height:17px;font-weight:400;color:#303030;">1</span>
<span class=t style="left:333.40px;top:695.50px;font-size:12px;line-height:17px;font-weight:400;color:#303030;transform:scaleX(0.8650);">DEPGRP_EN_CON</span>
<span class=t style="left:509.00px;top:695.50px;font-size:12px;line-height:17px;font-weight:400;color:#303030;">0</span>
<span class=t style="left:612.00px;top:695.50px;font-size:12px;line-height:17px;font-weight:400;color:#3b73c4;">0</span>
<span class=t style="left:712.00px;top:695.50px;font-size:12px;line-height:17px;font-weight:400;color:#2d62b8;text-decoration:underline;text-underline-offset:1.5px">0</span>
<span class=t style="left:812.50px;top:695.50px;font-size:12px;line-height:17px;font-weight:400;color:#3b73c4;">0</span>
<span class=t style="left:913.00px;top:695.50px;font-size:12px;line-height:17px;font-weight:400;color:#3b73c4;">0</span>
<span class=t style="left:1013.00px;top:695.50px;font-size:12px;line-height:17px;font-weight:400;color:#303030;">0</span>
<span class=t style="left:1102.50px;top:695.50px;font-size:12px;line-height:17px;font-weight:400;color:#303030;">1</span>
<span class=t style="left:333.40px;top:723.50px;font-size:12px;line-height:17px;font-weight:400;color:#303030;transform:scaleX(0.8650);">DEPGRP_EN_WAR</span>
<span class=t style="left:509.00px;top:723.50px;font-size:12px;line-height:17px;font-weight:400;color:#303030;">0</span>
<span class=t style="left:612.00px;top:723.50px;font-size:12px;line-height:17px;font-weight:400;color:#3b73c4;">0</span>
<span class=t style="left:712.00px;top:723.50px;font-size:12px;line-height:17px;font-weight:400;color:#2d62b8;text-decoration:underline;text-underline-offset:1.5px">0</span>
<span class=t style="left:812.50px;top:723.50px;font-size:12px;line-height:17px;font-weight:400;color:#3b73c4;">0</span>
<span class=t style="left:913.00px;top:723.50px;font-size:12px;line-height:17px;font-weight:400;color:#3b73c4;">0</span>
<span class=t style="left:1013.00px;top:723.50px;font-size:12px;line-height:17px;font-weight:400;color:#303030;">0</span>
<span class=t style="left:1102.50px;top:723.50px;font-size:12px;line-height:17px;font-weight:400;color:#303030;">1</span>
<span class=t style="left:333.40px;top:751.50px;font-size:12px;line-height:17px;font-weight:400;color:#303030;transform:scaleX(0.8650);">DEPGRP_EN_DESGTEAM</span>
<span class=t style="left:509.00px;top:751.50px;font-size:12px;line-height:17px;font-weight:400;color:#303030;">0</span>
<span class=t style="left:612.00px;top:751.50px;font-size:12px;line-height:17px;font-weight:400;color:#3b73c4;">0</span>
<span class=t style="left:712.00px;top:751.50px;font-size:12px;line-height:17px;font-weight:400;color:#2d62b8;text-decoration:underline;text-underline-offset:1.5px">0</span>
<span class=t style="left:812.50px;top:751.50px;font-size:12px;line-height:17px;font-weight:400;color:#3b73c4;">0</span>
<span class=t style="left:913.00px;top:751.50px;font-size:12px;line-height:17px;font-weight:400;color:#3b73c4;">0</span>
<span class=t style="left:1013.00px;top:751.50px;font-size:12px;line-height:17px;font-weight:400;color:#303030;">0</span>
<span class=t style="left:1102.50px;top:751.50px;font-size:12px;line-height:17px;font-weight:400;color:#303030;">1</span>
<span class=t style="left:333.40px;top:779.50px;font-size:12px;line-height:17px;font-weight:400;color:#303030;transform:scaleX(0.8650);">DEPGRP_EN</span>
<span class=t style="left:509.00px;top:779.50px;font-size:12px;line-height:17px;font-weight:400;color:#303030;">0</span>
<span class=t style="left:612.00px;top:779.50px;font-size:12px;line-height:17px;font-weight:400;color:#3b73c4;">0</span>
<span class=t style="left:712.00px;top:779.50px;font-size:12px;line-height:17px;font-weight:400;color:#2d62b8;text-decoration:underline;text-underline-offset:1.5px">0</span>
<span class=t style="left:812.50px;top:779.50px;font-size:12px;line-height:17px;font-weight:400;color:#3b73c4;">0</span>
<span class=t style="left:913.00px;top:779.50px;font-size:12px;line-height:17px;font-weight:400;color:#3b73c4;">0</span>
<span class=t style="left:1013.00px;top:779.50px;font-size:12px;line-height:17px;font-weight:400;color:#303030;">0</span>
<span class=t style="left:1102.50px;top:779.50px;font-size:12px;line-height:17px;font-weight:400;color:#303030;">1</span>
<span class=t style="left:333.40px;top:807.50px;font-size:12px;line-height:17px;font-weight:400;color:#303030;transform:scaleX(0.8650);">DEPGRP_EN_ASSTEAM</span>
<span class=t style="left:509.00px;top:807.50px;font-size:12px;line-height:17px;font-weight:400;color:#303030;">0</span>
<span class=t style="left:612.00px;top:807.50px;font-size:12px;line-height:17px;font-weight:400;color:#3b73c4;">0</span>
<span class=t style="left:712.00px;top:807.50px;font-size:12px;line-height:17px;font-weight:400;color:#2d62b8;text-decoration:underline;text-underline-offset:1.5px">0</span>
<span class=t style="left:812.50px;top:807.50px;font-size:12px;line-height:17px;font-weight:400;color:#3b73c4;">0</span>
<span class=t style="left:913.00px;top:807.50px;font-size:12px;line-height:17px;font-weight:400;color:#3b73c4;">0</span>
<span class=t style="left:1013.00px;top:807.50px;font-size:12px;line-height:17px;font-weight:400;color:#303030;">0</span>
<span class=t style="left:1102.50px;top:807.50px;font-size:12px;line-height:17px;font-weight:400;color:#303030;">1</span>
<span class=t style="left:333.40px;top:836.50px;font-size:12px;line-height:17px;font-weight:400;color:#303030;transform:scaleX(0.8650);">DEPGRP_EN_HR</span>
<span class=t style="left:509.00px;top:836.50px;font-size:12px;line-height:17px;font-weight:400;color:#303030;">0</span>
<span class=t style="left:612.00px;top:836.50px;font-size:12px;line-height:17px;font-weight:400;color:#3b73c4;">0</span>
<span class=t style="left:712.00px;top:836.50px;font-size:12px;line-height:17px;font-weight:400;color:#2d62b8;text-decoration:underline;text-underline-offset:1.5px">0</span>
<span class=t style="left:812.50px;top:836.50px;font-size:12px;line-height:17px;font-weight:400;color:#3b73c4;">0</span>
<span class=t style="left:913.00px;top:836.50px;font-size:12px;line-height:17px;font-weight:400;color:#3b73c4;">0</span>
<span class=t style="left:1013.00px;top:836.50px;font-size:12px;line-height:17px;font-weight:400;color:#303030;">0</span>
<span class=t style="left:1102.50px;top:836.50px;font-size:12px;line-height:17px;font-weight:400;color:#303030;">1</span>
<span class=t style="left:333.40px;top:864.50px;font-size:12px;line-height:17px;font-weight:400;color:#303030;transform:scaleX(0.8650);">DEPGRP_EN_ADM</span>
<span class=t style="left:509.00px;top:864.50px;font-size:12px;line-height:17px;font-weight:400;color:#303030;">0</span>
<span class=t style="left:612.00px;top:864.50px;font-size:12px;line-height:17px;font-weight:400;color:#3b73c4;">0</span>
<span class=t style="left:712.00px;top:864.50px;font-size:12px;line-height:17px;font-weight:400;color:#2d62b8;text-decoration:underline;text-underline-offset:1.5px">0</span>
<span class=t style="left:812.50px;top:864.50px;font-size:12px;line-height:17px;font-weight:400;color:#3b73c4;">0</span>
<span class=t style="left:913.00px;top:864.50px;font-size:12px;line-height:17px;font-weight:400;color:#3b73c4;">0</span>
<span class=t style="left:1013.00px;top:864.50px;font-size:12px;line-height:17px;font-weight:400;color:#303030;">0</span>
<span class=t style="left:1102.50px;top:864.50px;font-size:12px;line-height:17px;font-weight:400;color:#303030;">1</span>
<span class=t style="left:333.40px;top:892.50px;font-size:12px;line-height:17px;font-weight:400;color:#303030;transform:scaleX(0.8650);clip-path:inset(0 0 7.5px 0);">DEPGRP_EN_CO</span>
<span class=t style="left:509.00px;top:892.50px;font-size:12px;line-height:17px;font-weight:400;color:#303030;clip-path:inset(0 0 7.5px 0);">0</span>
<span class=t style="left:612.00px;top:892.50px;font-size:12px;line-height:17px;font-weight:400;color:#3b73c4;clip-path:inset(0 0 7.5px 0);">0</span>
<span class=t style="left:712.00px;top:892.50px;font-size:12px;line-height:17px;font-weight:400;color:#2d62b8;clip-path:inset(0 0 7.5px 0);text-decoration:underline;text-underline-offset:1.5px">0</span>
<span class=t style="left:812.50px;top:892.50px;font-size:12px;line-height:17px;font-weight:400;color:#3b73c4;clip-path:inset(0 0 7.5px 0);">0</span>
<span class=t style="left:913.00px;top:892.50px;font-size:12px;line-height:17px;font-weight:400;color:#3b73c4;clip-path:inset(0 0 7.5px 0);">0</span>
<span class=t style="left:1013.00px;top:892.50px;font-size:12px;line-height:17px;font-weight:400;color:#303030;clip-path:inset(0 0 7.5px 0);">0</span>
<span class=t style="left:1102.50px;top:892.50px;font-size:12px;line-height:17px;font-weight:400;color:#303030;clip-path:inset(0 0 7.5px 0);">1</span>
</div>
<div id="frame">
<div class=b style='left:0;top:0;width:1920px;height:1133px;border-style:solid;border-color:#000;border-width:1px 1px 2px 1px'></div>
<div class=b style='left:1px;top:1px;width:1918px;height:1130px;border:1px solid rgba(255,255,255,0.12)'></div>
</div>
</body></html>
